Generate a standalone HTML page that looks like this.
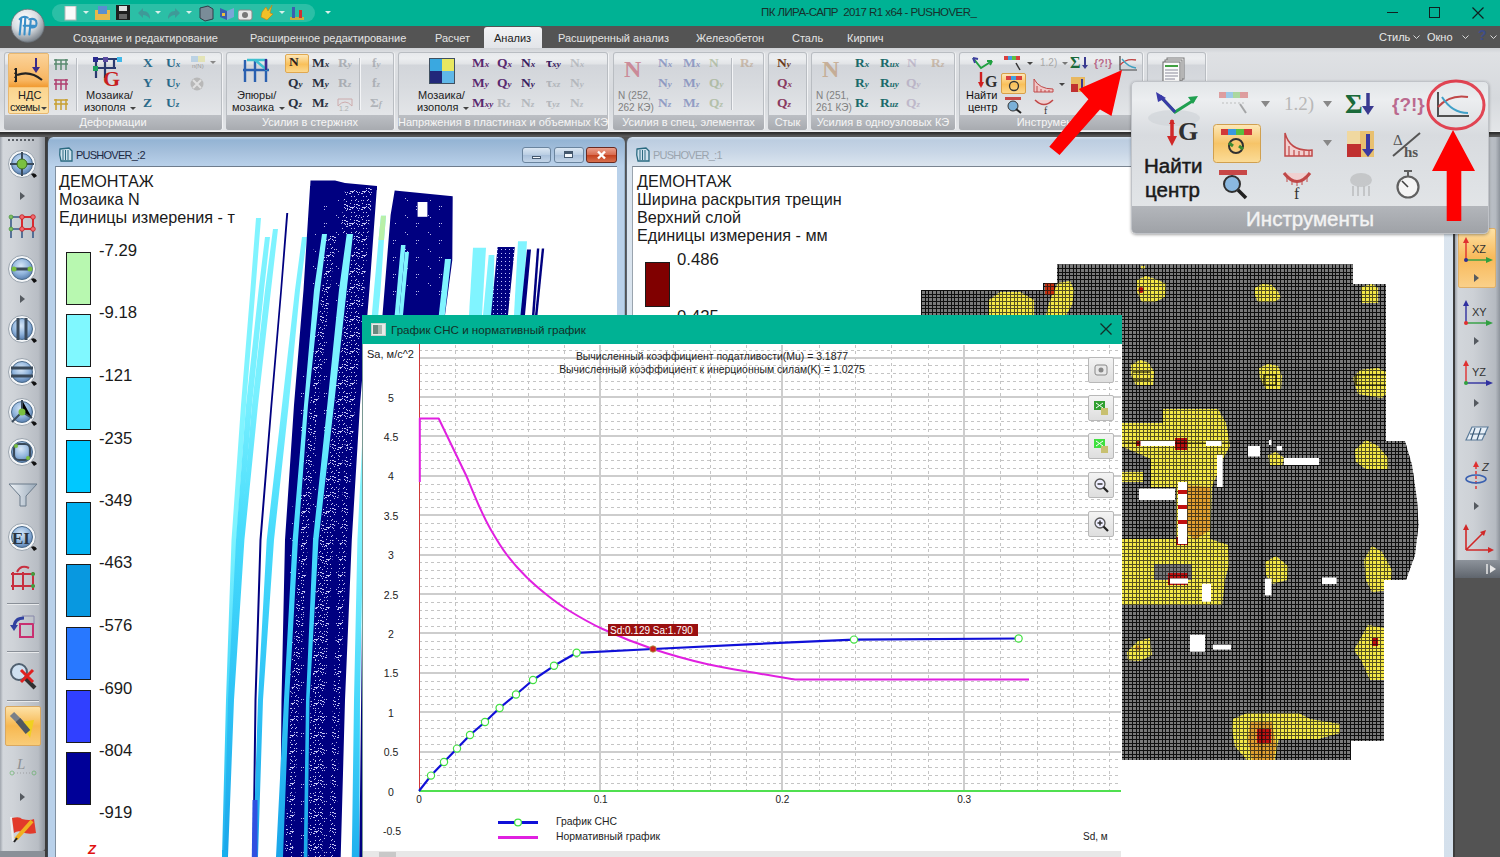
<!DOCTYPE html><html><head><meta charset="utf-8"><style>
*{margin:0;padding:0;box-sizing:border-box}
html,body{width:1500px;height:857px;overflow:hidden;background:#535353;font-family:"Liberation Sans",sans-serif}
.a{position:absolute}
.tab{position:absolute;top:32px;font-size:11px;line-height:12px;color:#e4e4e4;white-space:nowrap}
.grp{position:absolute;top:52px;height:78px;border-radius:3px;background:linear-gradient(#e6e8eb 0%,#eceef0 8%,#e2e4e7 15%,#d2d5da 17%,#d8dbdf 45%,#e3e5e8 80%,#e6e8ea 100%);box-shadow:inset 0 0 0 1px #b9bdc2,1px 0 0 #f2f3f5}
.glab{position:absolute;left:0;bottom:0;width:100%;height:15px;background:linear-gradient(#bcbfc4,#a8abb0);color:#f6f6f6;font-size:11px;text-align:center;line-height:14px;border-radius:0 0 3px 3px;white-space:nowrap;overflow:hidden}
.s{position:absolute;font-family:"Liberation Serif",serif;font-weight:bold;font-size:13.5px;line-height:15px;white-space:nowrap;margin-top:-2px}
.s i{font-size:9px;}
.t11{position:absolute;font-size:11px;line-height:12px;color:#1e1e1e;white-space:nowrap}
.lt{position:absolute;font-size:16.2px;line-height:17px;color:#1a1a1a;white-space:nowrap}
</style></head><body>
<div class="a" style="left:0px;top:0px;width:1500px;height:26px;background:#00b294"></div>
<div class="a" style="left:52px;top:4px;width:263px;height:18px;background:#2bbfa6;border-radius:9px"></div>
<svg class="a" style="left:10px;top:8px;z-index:5" width="37" height="37" viewBox="0 0 46 46">
<defs><radialGradient id="lg" cx="40%" cy="30%" r="70%"><stop offset="0" stop-color="#ffffff"/><stop offset="0.55" stop-color="#d8dde2"/><stop offset="1" stop-color="#7d858d"/></radialGradient></defs>
<circle cx="22" cy="22" r="20.5" fill="url(#lg)" stroke="#6a7078" stroke-width="1"/>
<path d="M12 14 Q16 9 22 12 M14 13 L12 33 M19 12 L18 33 M17 22 L30 22 M24 14 Q33 12 33 19 Q33 25 26 24 M26 14 L24 33" stroke="#3a8fc8" stroke-width="2.6" fill="none" stroke-linecap="round"/>
</svg>
<svg class="a" style="left:64px;top:6px" width="17" height="17"><rect x="1" y="0" width="11" height="14" fill="#fafafa" stroke="#b8b8b8"/></svg>
<svg class="a" style="left:95px;top:5px" width="17" height="17"><rect x="0" y="5" width="15" height="10" fill="#e8b84a"/><rect x="3" y="1" width="9" height="8" fill="#5a8fd0"/></svg>
<svg class="a" style="left:116px;top:5px" width="17" height="17"><rect x="0" y="0" width="14" height="15" fill="#1e1e1e"/><rect x="3" y="1" width="8" height="5" fill="#e0e0e0"/><rect x="3" y="9" width="8" height="5" fill="#666"/></svg>
<svg class="a" style="left:136px;top:6px" width="17" height="17"><path d="M2 7 L7 2 L7 5 Q14 5 14 13 Q11 9 7 9 L7 12 Z" fill="#3e9a98"/></svg>
<svg class="a" style="left:166px;top:6px" width="17" height="17"><path d="M14 7 L9 2 L9 5 Q2 5 2 13 Q5 9 9 9 L9 12 Z" fill="#3e9a98"/></svg>
<svg class="a" style="left:198px;top:5px" width="17" height="17"><path d="M2 3 L10 1 L15 4 L15 14 L7 16 L2 13 Z" fill="#7a8c98" stroke="#2f3c48"/></svg>
<svg class="a" style="left:219px;top:5px" width="17" height="17"><path d="M1 3 L8 6 L8 15 L1 12 Z" fill="#3a5fb0"/><path d="M8 6 L15 3 L15 12 L8 15 Z" fill="#7ba6d8"/><rect x="3" y="8" width="3" height="3" fill="#e8c040"/></svg>
<svg class="a" style="left:238px;top:7px" width="17" height="17"><rect x="0" y="3" width="14" height="10" rx="2" fill="#e8e8e8" stroke="#888"/><circle cx="7" cy="8" r="3" fill="#777"/></svg>
<svg class="a" style="left:259px;top:4px" width="17" height="17"><path d="M3 8 L7 3 L9 7 L13 1 L11 9 L14 10 L8 16 L2 13 Z" fill="#f0c028" stroke="#c08010" stroke-width="0.6"/></svg>
<svg class="a" style="left:289px;top:5px" width="17" height="17"><rect x="1" y="12" width="14" height="3" fill="#c8b040"/><rect x="3" y="2" width="3" height="11" fill="#3a5fb0"/><rect x="10" y="5" width="3" height="8" fill="#d03030"/></svg>
<div class="a" style="left:83px;top:11px;width:0;height:0;border-left:3px solid transparent;border-right:3px solid transparent;border-top:3px solid #d8f0ea"></div>
<div class="a" style="left:155px;top:11px;width:0;height:0;border-left:3px solid transparent;border-right:3px solid transparent;border-top:3px solid #d8f0ea"></div>
<div class="a" style="left:186px;top:11px;width:0;height:0;border-left:3px solid transparent;border-right:3px solid transparent;border-top:3px solid #d8f0ea"></div>
<div class="a" style="left:279px;top:11px;width:0;height:0;border-left:3px solid transparent;border-right:3px solid transparent;border-top:3px solid #d8f0ea"></div>
<div class="a" style="left:325px;top:11px;width:0;height:0;border-left:3px solid transparent;border-right:3px solid transparent;border-top:3px solid #d8f0ea"></div>
<div class="t11" style="left:761px;top:5px;font-size:11.5px;line-height:14px;color:#17302c;letter-spacing:-0.58px">ПК ЛИРА-САПР&nbsp; 2017 R1 x64 - PUSHOVER_</div>
<div class="a" style="left:1387px;top:12px;width:11px;height:1px;background:#102020"></div>
<div class="a" style="left:1429px;top:7px;width:11px;height:11px;border:1px solid #102020"></div>
<svg class="a" style="left:1472px;top:7px" width="12" height="12"><path d="M0.5 0.5 L11.5 11.5 M11.5 0.5 L0.5 11.5" stroke="#102020" stroke-width="1.2"/></svg>
<div class="a" style="left:0px;top:26px;width:1500px;height:22px;background:#545454"></div>
<div class="a" style="left:484px;top:27px;width:58px;height:22px;background:linear-gradient(#f2f3f5,#e2e4e8);border-radius:3px 3px 0 0"></div>
<div class="t11" style="left:494px;top:32px;font-size:11px;color:#222">Анализ</div>
<div class="tab" style="left:73px">Создание и редактирование</div>
<div class="tab" style="left:250px">Расширенное редактирование</div>
<div class="tab" style="left:435px">Расчет</div>
<div class="tab" style="left:558px">Расширенный анализ</div>
<div class="tab" style="left:696px">Железобетон</div>
<div class="tab" style="left:792px">Сталь</div>
<div class="tab" style="left:847px">Кирпич</div>
<div class="t11" style="left:1379px;top:31px;font-size:11px;color:#e8e8e8">Стиль</div>
<div class="t11" style="left:1427px;top:31px;font-size:11px;color:#e8e8e8">Окно</div>
<div class="t11" style="left:1478px;top:29px;font-size:14px;color:#3d4d8a;font-weight:bold">?</div>
<svg class="a" style="left:1413px;top:35px" width="7" height="5"><path d="M0.5 0.5 L3.5 3.5 L6.5 0.5" stroke="#d8d8d8" fill="none"/></svg>
<svg class="a" style="left:1462px;top:35px" width="7" height="5"><path d="M0.5 0.5 L3.5 3.5 L6.5 0.5" stroke="#d8d8d8" fill="none"/></svg>
<svg class="a" style="left:1490px;top:35px" width="7" height="5"><path d="M0.5 0.5 L3.5 3.5 L6.5 0.5" stroke="#d8d8d8" fill="none"/></svg>
<div class="a" style="left:0px;top:48px;width:1500px;height:84px;background:linear-gradient(#cfd2d6,#dfe1e4 6%,#d6d9dd 60%,#e4e6e9)"></div>
<div class="grp" style="left:4px;width:218px"><div class="glab">Деформации</div></div>
<div class="grp" style="left:226px;width:168px"><div class="glab">Усилия в стержнях</div></div>
<div class="grp" style="left:398px;width:210px"><div class="glab">Напряжения в пластинах и объемных КЭ</div></div>
<div class="grp" style="left:613px;width:151px"><div class="glab">Усилия в спец. элементах</div></div>
<div class="grp" style="left:768px;width:39px"><div class="glab">Стык</div></div>
<div class="grp" style="left:811px;width:144px"><div class="glab">Усилия в одноузловых КЭ</div></div>
<div class="grp" style="left:959px;width:184px"><div class="glab">Инструменты</div></div>
<div class="grp" style="left:1147px;width:59px"><div class="glab"></div></div>
<div class="a" style="left:8px;top:53px;width:41px;height:61px;background:linear-gradient(#fbd39a 0%,#f7b560 45%,#f19a30 56%,#fbd48e 57%,#fde3a8 100%);border:1px solid #e8b870;border-radius:2px"></div>
<svg class="a" style="left:12px;top:56px" width="34" height="30"><path d="M4 12 L4 26" stroke="#222" stroke-width="2"/><path d="M2 13 L4 14 M2 17 L4 18 M2 21 L4 22 M2 25 L4 26" stroke="#222"/><path d="M5 19 Q18 14 30 24" stroke="#222" stroke-width="2.2" fill="none"/><path d="M24 2 L24 14" stroke="#3a2a8a" stroke-width="2"/><path d="M20 11 L24 17 L28 11 Z" fill="#3a2a8a"/></svg>
<div class="t11" style="left:18px;top:89px;font-size:11px;line-height:13px;color:#222">НДС</div>
<div class="t11" style="left:10px;top:101px;font-size:11px;line-height:13px;color:#222;letter-spacing:-0.6px">схемы</div>
<div class="a" style="left:41px;top:107px;width:0;height:0;border-left:3px solid transparent;border-right:3px solid transparent;border-top:3px solid #444"></div>
<svg class="a" style="left:53px;top:57px" width="16" height="14"><path d="M1 3 L15 3 M1 7 L15 7 M3 2 L3 13 M8 3 L8 13 M13 2 L13 13" stroke="#5a8a70" stroke-width="1.5" fill="none"/></svg>
<svg class="a" style="left:53px;top:77px" width="16" height="14"><path d="M1 3 L15 3 M1 7 L15 7 M3 2 L3 13 M8 3 L8 13 M13 2 L13 13" stroke="#b04070" stroke-width="1.5" fill="none"/></svg>
<svg class="a" style="left:53px;top:97px" width="16" height="14"><path d="M1 3 L15 3 M1 7 L15 7 M3 2 L3 13 M8 3 L8 13 M13 2 L13 13" stroke="#c8a030" stroke-width="1.5" fill="none"/></svg>
<div class="a" style="left:76px;top:58px;width:1px;height:53px;background:#b8bcc2;box-shadow:1px 0 0 #f4f5f7"></div>
<svg class="a" style="left:92px;top:56px" width="36" height="32"><path d="M3 3 L28 3 M3 12 L24 12 M4 3 L4 22 M13 3 L13 22 M22 3 L22 12" stroke="#2a3a70" stroke-width="2.2"/><rect x="1" y="1" width="5" height="5" fill="#2a2a90"/><rect x="11" y="1" width="5" height="5" fill="#5a4aa0"/><rect x="25" y="1" width="5" height="5" fill="#40b8e8"/><rect x="1" y="10" width="5" height="5" fill="#20a060"/><text x="11" y="30" font-family="Liberation Serif" font-weight="bold" font-size="22" fill="#c82020">G</text></svg>
<div class="t11" style="left:86px;top:89px;font-size:11px;line-height:13px;color:#222">Мозаика/</div>
<div class="t11" style="left:84px;top:101px;font-size:11px;line-height:13px;color:#222">изополя</div>
<div class="a" style="left:130px;top:107px;width:0;height:0;border-left:3px solid transparent;border-right:3px solid transparent;border-top:3px solid #444"></div>
<div class="s" style="left:143px;top:57px;color:#2a6a8a;opacity:1">X</div>
<div class="s" style="left:143px;top:77px;color:#2a6a8a;opacity:1">Y</div>
<div class="s" style="left:143px;top:97px;color:#2a6a8a;opacity:1">Z</div>
<div class="s" style="left:166px;top:57px;color:#2a6a8a;opacity:1">U<i>x</i></div>
<div class="s" style="left:166px;top:77px;color:#2a6a8a;opacity:1">U<i>y</i></div>
<div class="s" style="left:166px;top:97px;color:#2a6a8a;opacity:1">U<i>z</i></div>
<svg class="a" style="left:190px;top:55px" width="16" height="14"><rect x="1" y="1" width="7" height="6" fill="#a8c8e0" opacity="0.7"/><rect x="8" y="1" width="7" height="6" fill="#e0e0a0" opacity="0.7"/><text x="2" y="13" font-size="6" fill="#999">n(N)</text></svg>
<div class="a" style="left:210px;top:61px;width:0;height:0;border-left:3px solid transparent;border-right:3px solid transparent;border-top:3px solid #888"></div>
<svg class="a" style="left:189px;top:76px" width="16" height="16"><circle cx="8" cy="8" r="6.5" fill="#b8b8b8"/><path d="M4 4 L12 12 M12 4 L4 12" stroke="#e0e0e0" stroke-width="2"/></svg>
<svg class="a" style="left:242px;top:57px" width="28" height="26"><path d="M1 13 L27 13 M3 3 L3 25 M13 3 L13 25 M24 3 L24 25" stroke="#2a60b0" stroke-width="2.4"/><path d="M5 3 L25 3 M13 3 L25 13" stroke="#40c0d0" stroke-width="2.4"/><path d="M24 2 L24 13" stroke="#3a2a90" stroke-width="2.4"/></svg>
<div class="t11" style="left:237px;top:89px;font-size:11px;line-height:13px;color:#222">Эпюры/</div>
<div class="t11" style="left:232px;top:101px;font-size:11px;line-height:13px;color:#222">мозаика</div>
<div class="a" style="left:279px;top:107px;width:0;height:0;border-left:3px solid transparent;border-right:3px solid transparent;border-top:3px solid #444"></div>
<div class="a" style="left:285px;top:54px;width:24px;height:19px;background:linear-gradient(#fde7b8,#f9c05a 55%,#fbd88e);border:1px solid #e0a850;border-radius:2px"></div>
<div class="s" style="left:289px;top:56px;color:#2a2020;opacity:1">N</div>
<div class="s" style="left:288px;top:77px;color:#2a3040;opacity:1">Q<i>y</i></div>
<div class="s" style="left:288px;top:97px;color:#2a3040;opacity:1">Q<i>z</i></div>
<div class="s" style="left:312px;top:57px;color:#2a3040;opacity:1">M<i>x</i></div>
<div class="s" style="left:312px;top:77px;color:#2a3040;opacity:1">M<i>y</i></div>
<div class="s" style="left:312px;top:97px;color:#2a3040;opacity:1">M<i>z</i></div>
<div class="s" style="left:338px;top:57px;color:#8a8f96;opacity:0.6">R<i>y</i></div>
<div class="s" style="left:338px;top:77px;color:#8a8f96;opacity:0.6">R<i>z</i></div>
<svg class="a" style="left:337px;top:96px" width="16" height="16" opacity="0.55"><path d="M1 3 L15 3 L15 10 Q8 2 1 10 Z" fill="none" stroke="#c08080"/><text x="2" y="15" font-size="7" fill="#888">1.2</text></svg>
<div class="a" style="left:359px;top:58px;width:1px;height:52px;background:#b8bcc2;box-shadow:1px 0 0 #f4f5f7"></div>
<div class="s" style="left:372px;top:57px;color:#8a8f96;opacity:0.55">f<i>y</i></div>
<div class="s" style="left:372px;top:77px;color:#8a8f96;opacity:0.55">f<i>z</i></div>
<div class="s" style="left:370px;top:97px;color:#8a8f96;opacity:0.55">Σ<i>f</i></div>
<svg class="a" style="left:429px;top:58px" width="26" height="26"><rect x="0.5" y="0.5" width="25" height="25" fill="#203080" stroke="#405060"/><rect x="1" y="1" width="12" height="12" fill="#3aa8e0"/><rect x="13" y="1" width="12" height="12" fill="#e8e860"/><rect x="13" y="13" width="12" height="12" fill="#60b8e8"/><rect x="1" y="13" width="12" height="12" fill="#22287a"/></svg>
<div class="t11" style="left:418px;top:89px;font-size:11px;line-height:13px;color:#222">Мозаика/</div>
<div class="t11" style="left:417px;top:101px;font-size:11px;line-height:13px;color:#222">изополя</div>
<div class="a" style="left:463px;top:107px;width:0;height:0;border-left:3px solid transparent;border-right:3px solid transparent;border-top:3px solid #444"></div>
<div class="s" style="left:472px;top:57px;color:#5a2a70;opacity:1">M<i>x</i></div>
<div class="s" style="left:472px;top:77px;color:#5a2a70;opacity:1">M<i>y</i></div>
<div class="s" style="left:472px;top:97px;color:#5a2a70;opacity:1">M<i>xy</i></div>
<div class="s" style="left:497px;top:57px;color:#5a2a70;opacity:1">Q<i>x</i></div>
<div class="s" style="left:497px;top:77px;color:#5a2a70;opacity:1">Q<i>y</i></div>
<div class="s" style="left:497px;top:97px;color:#8a8f96;opacity:0.5">R<i>z</i></div>
<div class="s" style="left:521px;top:57px;color:#3a2060;opacity:1">N<i>x</i></div>
<div class="s" style="left:521px;top:77px;color:#3a2060;opacity:1">N<i>y</i></div>
<div class="s" style="left:521px;top:97px;color:#8a8f96;opacity:0.5">N<i>z</i></div>
<div class="s" style="left:546px;top:57px;color:#3a2060;opacity:1">τ<i>xy</i></div>
<div class="s" style="left:546px;top:77px;color:#8a8f96;opacity:0.5">τ<i>xz</i></div>
<div class="s" style="left:546px;top:97px;color:#8a8f96;opacity:0.5">τ<i>yz</i></div>
<div class="s" style="left:570px;top:57px;color:#8a8f96;opacity:0.45">N<i>x</i></div>
<div class="s" style="left:570px;top:77px;color:#8a8f96;opacity:0.45">N<i>y</i></div>
<div class="s" style="left:570px;top:97px;color:#8a8f96;opacity:0.45">N<i>z</i></div>
<div class="s" style="left:624px;top:59px;font-size:24px;line-height:24px;color:#c87888;opacity:0.8">N</div>
<div class="t11" style="left:618px;top:90px;font-size:10px;color:#808080">N (252,</div>
<div class="t11" style="left:618px;top:102px;font-size:10px;color:#808080">262 КЭ)</div>
<div class="s" style="left:658px;top:57px;color:#6070b0;opacity:0.6">N<i>x</i></div>
<div class="s" style="left:658px;top:77px;color:#6070b0;opacity:0.6">N<i>y</i></div>
<div class="s" style="left:658px;top:97px;color:#6070b0;opacity:0.6">N<i>z</i></div>
<div class="s" style="left:683px;top:57px;color:#6070b0;opacity:0.6">M<i>x</i></div>
<div class="s" style="left:683px;top:77px;color:#6070b0;opacity:0.6">M<i>y</i></div>
<div class="s" style="left:683px;top:97px;color:#6070b0;opacity:0.6">M<i>z</i></div>
<div class="s" style="left:709px;top:57px;color:#8aa070;opacity:0.5">N</div>
<div class="s" style="left:709px;top:77px;color:#8aa070;opacity:0.5">Q<i>y</i></div>
<div class="s" style="left:709px;top:97px;color:#8aa070;opacity:0.5">Q<i>z</i></div>
<div class="a" style="left:731px;top:58px;width:1px;height:52px;background:#b8bcc2;box-shadow:1px 0 0 #f4f5f7"></div>
<div class="s" style="left:740px;top:57px;color:#b09070;opacity:0.5">R<i>z</i></div>
<div class="s" style="left:777px;top:57px;color:#6a3a20;opacity:1">N<i>y</i></div>
<div class="s" style="left:777px;top:77px;color:#8a3a60;opacity:1">Q<i>x</i></div>
<div class="s" style="left:777px;top:97px;color:#8a3a60;opacity:1">Q<i>z</i></div>
<div class="s" style="left:822px;top:59px;font-size:24px;line-height:24px;color:#c0a080;opacity:0.75">N</div>
<div class="t11" style="left:816px;top:90px;font-size:10px;color:#808080">N (251,</div>
<div class="t11" style="left:816px;top:102px;font-size:10px;color:#808080">261 КЭ)</div>
<div class="s" style="left:855px;top:57px;color:#1a6a6a;opacity:1">R<i>x</i></div>
<div class="s" style="left:855px;top:77px;color:#1a6a6a;opacity:1">R<i>y</i></div>
<div class="s" style="left:855px;top:97px;color:#1a6a6a;opacity:1">R<i>z</i></div>
<div class="s" style="left:880px;top:57px;color:#1a6a6a;opacity:1">R<i>ux</i></div>
<div class="s" style="left:880px;top:77px;color:#1a6a6a;opacity:1">R<i>uy</i></div>
<div class="s" style="left:880px;top:97px;color:#1a6a6a;opacity:1">R<i>uz</i></div>
<div class="s" style="left:907px;top:57px;color:#a090b0;opacity:0.5">N</div>
<div class="s" style="left:906px;top:77px;color:#a090b0;opacity:0.5">Q<i>y</i></div>
<div class="s" style="left:906px;top:97px;color:#a090b0;opacity:0.5">Q<i>z</i></div>
<div class="s" style="left:931px;top:57px;color:#b09070;opacity:0.5">R<i>z</i></div>
<svg class="a" style="left:970px;top:56px" width="60" height="34"><path d="M3 2 L11 12 L22 5" stroke="#20a040" stroke-width="2" fill="none"/><path d="M3 2 L5 7 M3 2 L8 3" stroke="#4040a0" stroke-width="2"/><path d="M22 5 L17 5 M22 5 L20 9" stroke="#20a040" stroke-width="2"/><path d="M11 16 L11 30" stroke="#d02020" stroke-width="2.4"/><path d="M8 26 L11 32 L14 26 Z" fill="#d02020"/><text x="15" y="31" font-family="Liberation Serif" font-weight="bold" font-size="16" fill="#303030">G</text></svg>
<div class="t11" style="left:966px;top:89px;font-size:11px;line-height:12px;color:#111">Найти</div>
<div class="t11" style="left:968px;top:101px;font-size:11px;line-height:12px;color:#111">центр</div>
<svg class="a" style="left:1003px;top:55px" width="20" height="18"><rect x="1" y="1" width="16" height="4" fill="#d84040"/><rect x="5" y="1" width="4" height="4" fill="#40a0e0"/><rect x="9" y="1" width="4" height="4" fill="#60c040"/><path d="M13 8 L17 15" stroke="#333" stroke-width="1.5"/></svg>
<div class="a" style="left:1027px;top:62px;width:0;height:0;border-left:3px solid transparent;border-right:3px solid transparent;border-top:3px solid #444"></div>
<div class="a" style="left:1001px;top:73px;width:25px;height:21px;background:linear-gradient(#fde7b8,#f9c05a 55%,#fbd88e);border:1px solid #d8a048;border-radius:2px"></div>
<svg class="a" style="left:1005px;top:75px" width="18" height="17"><rect x="1" y="1" width="16" height="4" fill="#d84040"/><rect x="6" y="1" width="5" height="4" fill="#40a0e0"/><circle cx="9" cy="11" r="4.5" fill="none" stroke="#333" stroke-width="1.3"/></svg>
<svg class="a" style="left:1004px;top:96px" width="20" height="18"><rect x="1" y="1" width="16" height="3" fill="#c84848"/><circle cx="9" cy="10" r="5" fill="#7ab0d8" stroke="#333"/><path d="M12 13 L17 17" stroke="#222" stroke-width="2"/></svg>
<div class="t11" style="left:1040px;top:57px;font-size:10px;color:#a8a8a8">1.2)</div>
<div class="a" style="left:1062px;top:62px;width:0;height:0;border-left:3px solid transparent;border-right:3px solid transparent;border-top:3px solid #777"></div>
<svg class="a" style="left:1070px;top:55px" width="20" height="16"><text x="0" y="13" font-family="Liberation Serif" font-weight="bold" font-size="16" fill="#1a6a3a">Σ</text><path d="M15 2 L15 12" stroke="#3a3a90" stroke-width="2"/><path d="M12 10 L15 14 L18 10 Z" fill="#3a3a90"/></svg>
<div class="t11" style="left:1094px;top:57px;font-size:10.5px;color:#b86a88;font-weight:bold">{?!}</div>
<svg class="a" style="left:1118px;top:55px" width="20" height="18"><path d="M2 1 L2 15 L19 15" stroke="#444" stroke-width="1.2" fill="none"/><path d="M2 10 Q8 3 18 5" stroke="#c04040" fill="none" stroke-width="1.3"/><path d="M4 4 Q10 12 18 13" stroke="#40a0c0" fill="none" stroke-width="1.3"/></svg>
<svg class="a" style="left:1033px;top:77px" width="28" height="16"><path d="M1 2 Q6 12 20 12 L20 15 L1 15 Z" fill="#f0c8c8" stroke="#c04848"/><path d="M4 9 L4 15 M8 12 L8 15 M12 13 L12 15 M16 13 L16 15" stroke="#c04848"/></svg>
<div class="a" style="left:1059px;top:83px;width:0;height:0;border-left:3px solid transparent;border-right:3px solid transparent;border-top:3px solid #444"></div>
<svg class="a" style="left:1070px;top:76px" width="18" height="18"><rect x="1" y="1" width="14" height="15" fill="#e8b860"/><rect x="1" y="8" width="7" height="8" fill="#c03030"/><path d="M12 3 L12 14" stroke="#3a3a90" stroke-width="2"/></svg>
<svg class="a" style="left:1033px;top:97px" width="22" height="18"><path d="M2 3 Q11 12 20 3" stroke="#c04848" fill="#f0d0d0" stroke-width="1.5"/><text x="11" y="17" font-family="Liberation Serif" font-size="10" fill="#333">f</text></svg>
<svg class="a" style="left:1160px;top:57px" width="30" height="26"><rect x="7" y="1" width="17" height="21" fill="#f4f4f4" stroke="#777"/><rect x="5" y="3" width="17" height="21" fill="#f4f4f4" stroke="#777"/><rect x="3" y="5" width="17" height="20" fill="#fafafa" stroke="#666"/><rect x="5" y="8" width="13" height="2" fill="#40a040"/><path d="M5 13 L18 13 M5 16 L18 16 M5 19 L18 19 M5 22 L15 22" stroke="#8a8a9a"/></svg>
<div class="a" style="left:0px;top:131px;width:1500px;height:6px;background:linear-gradient(#f2f2f2 0,#f2f2f2 1px,#2a2a2a 1px,#3a3a3a 3px,#505050 4px,#5c5c5c 6px)"></div>
<div class="a" style="left:0px;top:137px;width:45px;height:714px;background:linear-gradient(90deg,#9fa5ad 0,#d3d7dc 3px,#cfd3d8 30%,#b8bdc4 85%,#8f959d 100%);border-radius:0 0 3px 0"></div>
<div class="a" style="left:0px;top:851px;width:45px;height:6px;background:#8a9098"></div>
<div class="a" style="left:45px;top:137px;width:3px;height:720px;background:#3c3c3c"></div>
<div class="a" style="left:8px;top:139px;width:28px;height:2px;background:repeating-linear-gradient(90deg,#5a5f66 0 2px,transparent 2px 4px)"></div>
<svg class="a" style="left:6px;top:148px" width="34" height="34"><defs><radialGradient id="cg164" cx="45%" cy="35%" r="65%"><stop offset="0" stop-color="#d8e8f8"/><stop offset="0.6" stop-color="#90b4dc"/><stop offset="1" stop-color="#5a80b0"/></radialGradient></defs><circle cx="16" cy="16" r="13.5" fill="#f4f6f8" stroke="#9aa4ae" stroke-width="1"/><circle cx="16" cy="16" r="10.5" fill="url(#cg164)" stroke="#4a6a8a" stroke-width="1"/><path d="M16 4 L16 28 M4 16 L28 16" stroke="#3a4a5a" stroke-width="2"/><circle cx="16" cy="16" r="5" fill="#7ac040" stroke="#3a6a20"/><path d="M25 26 Q29 24 31 28 L28 30 Z" fill="#111"/></svg>
<div class="a" style="left:20px;top:192px;width:0;height:0;border-top:4px solid transparent;border-bottom:4px solid transparent;border-left:5px solid #555a60"></div>
<svg class="a" style="left:8px;top:212px" width="30" height="28"><path d="M3 5 L14 5 M3 17 L14 17 M3 5 L3 26 M14 17 L14 26 M25 17 L25 26" stroke="#3a5a88" stroke-width="1.6"/><path d="M14 5 L25 5 L25 17 L14 17 Z" stroke="#d82a30" stroke-width="2" fill="none"/><circle cx="3" cy="5" r="2" fill="#80c060" stroke="#3a8a30" stroke-width="0.6"/><circle cx="3" cy="17" r="2" fill="#80c060" stroke="#3a8a30" stroke-width="0.6"/><circle cx="14" cy="5" r="2.3" fill="#f06a70" stroke="#c02020" stroke-width="0.8"/><circle cx="25" cy="5" r="2.3" fill="#f06a70" stroke="#c02020" stroke-width="0.8"/><circle cx="14" cy="17" r="2.3" fill="#f06a70" stroke="#c02020" stroke-width="0.8"/><circle cx="25" cy="17" r="2.3" fill="#f06a70" stroke="#c02020" stroke-width="0.8"/></svg>
<svg class="a" style="left:6px;top:253px" width="34" height="34"><defs><radialGradient id="cg269" cx="45%" cy="35%" r="65%"><stop offset="0" stop-color="#d8e8f8"/><stop offset="0.6" stop-color="#90b4dc"/><stop offset="1" stop-color="#5a80b0"/></radialGradient></defs><circle cx="16" cy="16" r="13.5" fill="#f4f6f8" stroke="#9aa4ae" stroke-width="1"/><circle cx="16" cy="16" r="10.5" fill="url(#cg269)" stroke="#4a6a8a" stroke-width="1"/><path d="M7 16 L25 16" stroke="#3a4a5a" stroke-width="3"/><circle cx="8" cy="16" r="2.5" fill="#7ac040"/><circle cx="24" cy="16" r="2.5" fill="#7ac040"/><path d="M25 26 Q29 24 31 28 L28 30 Z" fill="#111"/></svg>
<div class="a" style="left:20px;top:295px;width:0;height:0;border-top:4px solid transparent;border-bottom:4px solid transparent;border-left:5px solid #555a60"></div>
<svg class="a" style="left:6px;top:313px" width="34" height="34"><defs><radialGradient id="cg329" cx="45%" cy="35%" r="65%"><stop offset="0" stop-color="#d8e8f8"/><stop offset="0.6" stop-color="#90b4dc"/><stop offset="1" stop-color="#5a80b0"/></radialGradient></defs><circle cx="16" cy="16" r="13.5" fill="#f4f6f8" stroke="#9aa4ae" stroke-width="1"/><circle cx="16" cy="16" r="10.5" fill="url(#cg329)" stroke="#4a6a8a" stroke-width="1"/><path d="M12 5 L12 27 M20 5 L20 27" stroke="#3a4a5a" stroke-width="3"/><path d="M25 26 Q29 24 31 28 L28 30 Z" fill="#111"/></svg>
<svg class="a" style="left:6px;top:356px" width="34" height="34"><defs><radialGradient id="cg372" cx="45%" cy="35%" r="65%"><stop offset="0" stop-color="#d8e8f8"/><stop offset="0.6" stop-color="#90b4dc"/><stop offset="1" stop-color="#5a80b0"/></radialGradient></defs><circle cx="16" cy="16" r="13.5" fill="#f4f6f8" stroke="#9aa4ae" stroke-width="1"/><circle cx="16" cy="16" r="10.5" fill="url(#cg372)" stroke="#4a6a8a" stroke-width="1"/><path d="M5 12 L27 12 M5 20 L27 20" stroke="#3a4a5a" stroke-width="3"/><path d="M25 26 Q29 24 31 28 L28 30 Z" fill="#111"/></svg>
<svg class="a" style="left:6px;top:396px" width="34" height="34"><defs><radialGradient id="cg412" cx="45%" cy="35%" r="65%"><stop offset="0" stop-color="#d8e8f8"/><stop offset="0.6" stop-color="#90b4dc"/><stop offset="1" stop-color="#5a80b0"/></radialGradient></defs><circle cx="16" cy="16" r="13.5" fill="#f4f6f8" stroke="#9aa4ae" stroke-width="1"/><circle cx="16" cy="16" r="10.5" fill="url(#cg412)" stroke="#4a6a8a" stroke-width="1"/><path d="M16 4 L16 16 L26 22 M16 16 L6 26" stroke="#3a4a5a" stroke-width="2"/><circle cx="16" cy="16" r="3.5" fill="#7ac040"/><path d="M25 26 Q29 24 31 28 L28 30 Z" fill="#111"/></svg>
<svg class="a" style="left:6px;top:436px" width="34" height="34"><defs><radialGradient id="cg452" cx="45%" cy="35%" r="65%"><stop offset="0" stop-color="#d8e8f8"/><stop offset="0.6" stop-color="#90b4dc"/><stop offset="1" stop-color="#5a80b0"/></radialGradient></defs><circle cx="16" cy="16" r="13.5" fill="#f4f6f8" stroke="#9aa4ae" stroke-width="1"/><circle cx="16" cy="16" r="10.5" fill="url(#cg452)" stroke="#4a6a8a" stroke-width="1"/><rect x="8" y="8" width="16" height="16" rx="5" fill="none" stroke="#3a4a5a" stroke-width="2.2"/><circle cx="10" cy="10" r="2" fill="#7ac040"/><circle cx="22" cy="22" r="2" fill="#7ac040"/><path d="M25 26 Q29 24 31 28 L28 30 Z" fill="#111"/></svg>
<svg class="a" style="left:8px;top:482px" width="30" height="26"><defs><linearGradient id="fun" x1="0" x2="1"><stop offset="0" stop-color="#f0f4f8"/><stop offset="1" stop-color="#98a8b8"/></linearGradient></defs><path d="M1 2 L29 2 L18 14 L18 24 L12 24 L12 14 Z" fill="url(#fun)" stroke="#6a7a8a"/></svg>
<svg class="a" style="left:6px;top:521px" width="34" height="34"><defs><radialGradient id="cg537" cx="45%" cy="35%" r="65%"><stop offset="0" stop-color="#d8e8f8"/><stop offset="0.6" stop-color="#90b4dc"/><stop offset="1" stop-color="#5a80b0"/></radialGradient></defs><circle cx="16" cy="16" r="13.5" fill="#f4f6f8" stroke="#9aa4ae" stroke-width="1"/><circle cx="16" cy="16" r="10.5" fill="url(#cg537)" stroke="#4a6a8a" stroke-width="1"/><text x="6" y="23" font-family="Liberation Serif" font-weight="bold" font-size="17" fill="#2a3440">EI</text><path d="M25 26 Q29 24 31 28 L28 30 Z" fill="#111"/></svg>
<svg class="a" style="left:7px;top:562px" width="32" height="30"><path d="M4 12 L28 12 M4 24 L28 24 M6 10 L6 28 M16 10 L16 28 M26 10 L26 28" stroke="#c83040" stroke-width="2"/><path d="M10 10 Q14 2 22 6" stroke="#c83040" stroke-width="2" fill="none"/><circle cx="26" cy="12" r="2" fill="#40a040"/><circle cx="26" cy="24" r="2" fill="#40a040"/></svg>
<div class="a" style="left:7px;top:603px;width:32px;height:1px;background:#8a9098;box-shadow:0 1px 0 #e8eaec"></div>
<svg class="a" style="left:8px;top:612px" width="30" height="30"><rect x="12" y="12" width="13" height="13" fill="none" stroke="#c83070" stroke-width="2"/><path d="M14 4 L26 4 L26 12" stroke="#88a" fill="none"/><path d="M6 16 Q6 6 16 6" stroke="#3040a0" stroke-width="3" fill="none"/><path d="M2 13 L6 19 L10 13 Z" fill="#3040a0"/></svg>
<div class="a" style="left:7px;top:651px;width:32px;height:1px;background:#8a9098;box-shadow:0 1px 0 #e8eaec"></div>
<svg class="a" style="left:7px;top:660px" width="32" height="32"><circle cx="12" cy="12" r="8" fill="#cfe0f0" stroke="#506070" stroke-width="2"/><path d="M18 18 L28 28" stroke="#303030" stroke-width="4"/><path d="M14 10 L26 22 M26 10 L14 22" stroke="#e02020" stroke-width="3"/></svg>
<div class="a" style="left:7px;top:700px;width:32px;height:1px;background:#8a9098;box-shadow:0 1px 0 #e8eaec"></div>
<div class="a" style="left:5px;top:706px;width:36px;height:40px;background:linear-gradient(#fde2a8,#f7b850 50%,#f9cc78);border:1px solid #d9a860;border-radius:2px"></div>
<svg class="a" style="left:8px;top:710px" width="30" height="32"><path d="M4 4 L16 16" stroke="#7a8088" stroke-width="6"/><path d="M12 12 L26 10 L22 28 Z" fill="#f0d020"/><path d="M10 10 L20 22" stroke="#505860" stroke-width="6"/></svg>
<svg class="a" style="left:8px;top:755px" width="30" height="22" opacity="0.5"><text x="9" y="14" font-family="Liberation Serif" font-style="italic" font-size="15" fill="#555">L</text><circle cx="4" cy="18" r="2" fill="none" stroke="#4a4"/><circle cx="26" cy="18" r="2" fill="none" stroke="#4a4"/><path d="M6 18 L24 18" stroke="#777" stroke-dasharray="1 2"/></svg>
<div class="a" style="left:20px;top:793px;width:0;height:0;border-top:4px solid transparent;border-bottom:4px solid transparent;border-left:5px solid #555a60"></div>
<svg class="a" style="left:8px;top:815px" width="30" height="28"><path d="M3 2 L5 26" stroke="#eee" stroke-width="2"/><path d="M4 3 Q12 1 14 4 Q22 6 26 4 L28 18 Q20 20 14 17 Q10 15 6 18 Z" fill="#e23a2a"/><path d="M24 6 L8 24" stroke="#f0b020" stroke-width="4"/><path d="M9 23 L6 27" stroke="#222" stroke-width="2"/></svg>
<div class="a" style="left:47px;top:137px;width:578px;height:740px;background:linear-gradient(#c4d8ec 0,#94b4d4 3px,#a6c0dc 15px,#b9d1ea 29px,#b9d1ea 100%);border:1px solid #3c4650;border-right-color:#9ab4cc;border-top:none;border-radius:6px 6px 0 0"></div>
<div class="a" style="left:55px;top:166px;width:562px;height:691px;background:#fff;border-top:1px solid #6e7c8c;border-left:1px solid #8090a0"></div>
<svg class="a" style="left:58px;top:147px" width="15" height="15"><path d="M2 2 L11 1 L14 4 L14 14 L3 14 Q1 8 2 2 Z" fill="#cfe2ee" stroke="#2a6a80" stroke-width="1.3"/><path d="M5 3 L5 13 M7.5 3 L7.5 13 M10 3 L10 13" stroke="#2a6a80" stroke-width="1"/></svg>
<div class="t11" style="left:76px;top:149px;font-size:11px;line-height:12px;color:#1c2a44;letter-spacing:-0.75px">PUSHOVER_:2</div>
<div class="a" style="left:522px;top:147px;width:29px;height:16px;background:linear-gradient(#dbe7f3,#b9cde2 50%,#a9c0da 51%,#c3d5e8);border:1px solid #6a849e;border-radius:3px"></div>
<div class="a" style="left:532px;top:156px;width:9px;height:3px;background:#f4f8fc;border:1px solid #44586e"></div>
<div class="a" style="left:554px;top:147px;width:30px;height:16px;background:linear-gradient(#dbe7f3,#b9cde2 50%,#a9c0da 51%,#c3d5e8);border:1px solid #6a849e;border-radius:3px"></div>
<div class="a" style="left:564px;top:151px;width:9px;height:7px;background:#f4f8fc;border:1px solid #44586e;box-shadow:inset 0 2px 0 #44586e"></div>
<div class="a" style="left:586px;top:147px;width:31px;height:16px;background:linear-gradient(#eba08c,#d86a4e 50%,#c4401e 51%,#d8704e);border:1px solid #6a2a20;border-radius:3px"></div>
<svg class="a" style="left:596px;top:150px" width="11" height="10"><path d="M2 1.5 L9 8.5 M9 1.5 L2 8.5" stroke="#fff" stroke-width="2.4"/></svg>
<div class="lt" style="left:59px;top:173px;">ДЕМОНТАЖ</div>
<div class="lt" style="left:59px;top:191px;">Мозаика N</div>
<div class="lt" style="left:59px;top:209px;">Единицы измерения - т</div>
<div class="a" style="left:66px;top:252px;width:25px;height:53px;background:#b8f8b0;border:1px solid #1a1a1a"></div>
<div class="a" style="left:66px;top:314px;width:25px;height:53px;background:#80f8ff;border:1px solid #1a1a1a"></div>
<div class="a" style="left:66px;top:377px;width:25px;height:53px;background:#40e0ff;border:1px solid #1a1a1a"></div>
<div class="a" style="left:66px;top:440px;width:25px;height:53px;background:#00c8ff;border:1px solid #1a1a1a"></div>
<div class="a" style="left:66px;top:502px;width:25px;height:53px;background:#00b0f0;border:1px solid #1a1a1a"></div>
<div class="a" style="left:66px;top:564px;width:25px;height:53px;background:#0898e0;border:1px solid #1a1a1a"></div>
<div class="a" style="left:66px;top:627px;width:25px;height:53px;background:#2878ff;border:1px solid #1a1a1a"></div>
<div class="a" style="left:66px;top:690px;width:25px;height:53px;background:#3040ff;border:1px solid #1a1a1a"></div>
<div class="a" style="left:66px;top:752px;width:25px;height:53px;background:#000098;border:1px solid #1a1a1a"></div>
<div class="lt" style="left:99px;top:242px;font-size:16.7px;line-height:17px">-7.29</div>
<div class="lt" style="left:99px;top:304px;font-size:16.7px;line-height:17px">-9.18</div>
<div class="lt" style="left:99px;top:367px;font-size:16.7px;line-height:17px">-121</div>
<div class="lt" style="left:99px;top:430px;font-size:16.7px;line-height:17px">-235</div>
<div class="lt" style="left:99px;top:492px;font-size:16.7px;line-height:17px">-349</div>
<div class="lt" style="left:99px;top:554px;font-size:16.7px;line-height:17px">-463</div>
<div class="lt" style="left:99px;top:617px;font-size:16.7px;line-height:17px">-576</div>
<div class="lt" style="left:99px;top:680px;font-size:16.7px;line-height:17px">-690</div>
<div class="lt" style="left:99px;top:742px;font-size:16.7px;line-height:17px">-804</div>
<div class="lt" style="left:99px;top:804px;font-size:16.7px;line-height:17px">-919</div>
<div class="t11" style="left:88px;top:844px;font-size:13px;color:#e01010;font-style:italic;font-weight:bold">Z</div>
<svg class="a" style="left:0;top:0" width="620" height="857"><defs><pattern id="dots" width="4" height="4" patternUnits="userSpaceOnUse"><rect width="4" height="4" fill="#000080"/><rect x="1" y="1" width="1" height="1" fill="#c0c0ff"/></pattern><pattern id="spk" width="23" height="17" patternUnits="userSpaceOnUse"><rect x="2" y="2" width="1" height="1" fill="#b8b8e8"/><rect x="4" y="2" width="1" height="1" fill="#b8b8e8"/><rect x="2" y="5" width="1" height="1" fill="#b8b8e8"/><rect x="14" y="11" width="1" height="1" fill="#b8b8e8"/><rect x="16" y="13" width="1" height="1" fill="#b8b8e8"/></pattern><linearGradient id="cyg" gradientUnits="userSpaceOnUse" x1="0" y1="200" x2="0" y2="857"><stop offset="0" stop-color="#80f4ff"/><stop offset="0.3" stop-color="#78f0ff"/><stop offset="0.5" stop-color="#48dcfc"/><stop offset="0.75" stop-color="#30c4f6"/><stop offset="1" stop-color="#1aa6ea"/></linearGradient><linearGradient id="cyg1" gradientUnits="userSpaceOnUse" x1="0" y1="200" x2="0" y2="857"><stop offset="0" stop-color="#80f4ff"/><stop offset="0.5" stop-color="#80f4ff"/><stop offset="0.8" stop-color="#40d4fa"/><stop offset="1" stop-color="#20b0ee"/></linearGradient><pattern id="dns" width="12" height="16" patternUnits="userSpaceOnUse"><rect x="3" y="4" width="1" height="1" fill="#c8c8f4"/><rect x="5" y="15" width="1" height="1" fill="#c8c8f4"/><rect x="10" y="2" width="1" height="1" fill="#c8c8f4"/><rect x="9" y="0" width="1" height="1" fill="#c8c8f4"/><rect x="7" y="8" width="1" height="1" fill="#c8c8f4"/><rect x="8" y="7" width="1" height="1" fill="#c8c8f4"/><rect x="3" y="15" width="1" height="1" fill="#c8c8f4"/><rect x="8" y="15" width="1" height="1" fill="#c8c8f4"/><rect x="6" y="4" width="1" height="1" fill="#c8c8f4"/><rect x="3" y="4" width="1" height="1" fill="#c8c8f4"/><rect x="8" y="12" width="1" height="1" fill="#c8c8f4"/><rect x="11" y="0" width="1" height="1" fill="#c8c8f4"/><rect x="10" y="2" width="1" height="1" fill="#c8c8f4"/><rect x="2" y="1" width="1" height="1" fill="#c8c8f4"/><rect x="4" y="0" width="1" height="1" fill="#c8c8f4"/><rect x="4" y="15" width="1" height="1" fill="#c8c8f4"/><rect x="9" y="12" width="1" height="1" fill="#c8c8f4"/><rect x="11" y="13" width="1" height="1" fill="#c8c8f4"/><rect x="6" y="14" width="1" height="1" fill="#c8c8f4"/><rect x="2" y="11" width="1" height="1" fill="#c8c8f4"/><rect x="1" y="1" width="1" height="1" fill="#c8c8f4"/><rect x="2" y="15" width="1" height="1" fill="#c8c8f4"/><rect x="3" y="8" width="1" height="1" fill="#c8c8f4"/><rect x="10" y="13" width="1" height="1" fill="#c8c8f4"/><rect x="10" y="9" width="1" height="1" fill="#c8c8f4"/><rect x="6" y="12" width="1" height="1" fill="#c8c8f4"/></pattern><clipPath id="lwc"><rect x="56" y="167" width="561" height="690"/></clipPath></defs><g clip-path="url(#lwc)"><polygon points="256.0,218.0 250.4,290.0 241.0,405.0 231.5,540.0 226.0,700.0 222.0,857.0 226.0,857.0 230.0,700.0 236.5,540.0 246.0,405.0 255.4,290.0 261.0,218.0" fill="url(#cyg1)" /><polygon points="265.0,237.0 258.6,290.0 246.0,405.0 236.0,540.0 228.0,700.0 224.0,857.0 227.0,857.0 232.0,700.0 241.0,540.0 252.0,405.0 264.0,290.0 270.0,237.0" fill="url(#cyg)" /><polygon points="273.0,229.0 265.0,290.0 252.0,405.0 240.0,540.0 231.0,700.0 226.0,857.0 228.0,857.0 234.0,700.0 244.4,540.0 258.0,405.0 271.0,290.0 278.0,229.0" fill="url(#cyg)" /><polygon points="222.0,850.0 222.0,857.0 227.0,857.0 227.0,850.0" fill="#18b0ee" /><polygon points="286.3,213.0 280.3,290.0 270.5,405.0 259.5,540.0 254.5,700.0 252.5,857.0 254.5,857.0 256.5,700.0 261.5,540.0 272.3,405.0 282.0,290.0 288.2,213.0" fill="#000080" /><polygon points="302.0,237.0 295.0,290.0 282.0,405.0 266.7,540.0 258.0,700.0 253.0,857.0 258.0,857.0 263.0,700.0 274.0,540.0 288.7,405.0 300.0,290.0 307.0,237.0" fill="url(#cyg)" /><polygon points="252.5,800.0 251.8,857.0 257.4,857.0 257.5,800.0" fill="#3050e0" /><polygon points="310.1,186.0 303.5,290.0 294.0,405.0 285.0,540.0 281.5,700.0 280.0,857.0 340.7,857.0 345.0,700.0 351.8,540.0 360.0,405.0 369.4,290.0 377.0,186.0" fill="#000080" /><polygon points="310.5,180.5 335,180.5 345,183 377,186 377,190 310,190" fill="#000080"/><polygon points="318.0,200.0 310.0,290.0 300.0,405.0 290.0,540.0 286.0,700.0 284.0,857.0 334.0,857.0 338.0,700.0 344.0,540.0 352.0,405.0 362.0,290.0 372.0,200.0" fill="url(#spk)" /><polygon points="322.0,234.0 314.0,290.0 304.0,405.0 292.6,540.0 284.0,700.0 276.0,857.0 283.0,857.0 289.0,700.0 298.0,540.0 308.0,405.0 320.0,290.0 327.0,234.0" fill="url(#cyg)" /><polygon points="346.7,234.0 339.0,290.0 327.3,405.0 313.0,540.0 306.0,700.0 303.7,857.0 307.4,857.0 309.5,700.0 318.5,540.0 334.0,405.0 346.7,290.0 353.0,234.0" fill="url(#cyg)" /><polygon points="329.0,234.0 322.0,290.0 310.0,405.0 300.0,540.0 291.0,700.0 285.0,857.0 293.0,857.0 299.0,700.0 308.0,540.0 318.0,405.0 330.0,290.0 337.0,234.0" fill="url(#dns)" /><polygon points="354.0,234.0 347.7,290.0 335.0,405.0 319.5,540.0 310.5,700.0 308.4,857.0 322.4,857.0 324.5,700.0 333.5,540.0 349.0,405.0 361.7,290.0 368.0,234.0" fill="url(#dns)" /><polygon points="365.0,186.0 357.4,290.0 348.0,405.0 339.8,540.0 333.0,700.0 328.7,857.0 335.7,857.0 340.0,700.0 346.8,540.0 355.0,405.0 364.4,290.0 372.0,186.0" fill="url(#dns)" /><polygon points="345.0,190.0 340.0,234.0 368.0,234.0 372.0,190.0" fill="url(#dns)" /><polygon points="381.0,215.7 378.5,240.0 374.0,290.0 364.0,405.0 357.4,540.0 354.0,700.0 351.8,857.0 359.3,857.0 360.0,700.0 363.0,540.0 370.0,405.0 380.5,290.0 384.0,240.0 386.0,215.7" fill="url(#cyg1)" /><polygon points="381.0,215.7 378.5,240.0 384.0,240.0 386.0,215.7" fill="#b8f0a8" /><polygon points="394.7,190.6 452.7,196.3 452.3,260 445,315 445,857 359,857 359.3,857 363,540 382.5,315 390.6,215" fill="#000080"/><polygon points="398,196 450,201 448,300 386,300" fill="url(#spk)"/><rect x="417.6" y="202" width="9.8" height="14.8" fill="#fff"/><polygon points="401.0,245.0 394.7,315.0 399.0,315.0 405.5,245.0" fill="#80f4ff" /><polygon points="405.0,252.0 399.0,315.0 403.0,315.0 409.0,252.0" fill="#80f4ff" /><polygon points="445.0,259.0 438.8,315.0 444.8,315.0 451.0,259.0" fill="#80f4ff" /><polygon points="473.0,247.8 469.0,315.0 482.0,315.0 486.0,247.8" fill="#80f4ff" /><polygon points="488.7,255.0 483.0,315.0 492.7,315.0 494.4,255.0" fill="#80f4ff" /><polygon points="497.6,247.0 491.0,315.0 508.0,315.0 514.8,247.0" fill="url(#dots)" /><polygon points="518.0,241.3 514.0,315.0 522.0,315.0 527.0,241.3" fill="#80f4ff" /><polygon points="527.0,249.4 520.5,315.0 525.0,315.0 531.0,249.4" fill="#000080" /><polygon points="536.9,248.6 532.0,315.0 534.5,315.0 539.3,248.6" fill="#000080" /><polygon points="541.8,248.6 535.0,315.0 537.5,315.0 544.2,248.6" fill="#000080" /></g></svg>
<div class="a" style="left:626px;top:137px;width:828px;height:740px;background:linear-gradient(#d8e4f0 0,#bccde0 3px,#c8d6e6 15px,#dbe5ef 29px,#d4e0ec 100%);border:1px solid #5a6470;border-top:none;border-radius:6px 6px 0 0"></div>
<div class="a" style="left:632px;top:166px;width:812px;height:691px;background:#fff;border-top:1px solid #7a8490;border-left:1px solid #9aa4ae"></div>
<svg class="a" style="left:635px;top:147px" width="15" height="15"><path d="M2 2 L11 1 L14 4 L14 14 L3 14 Q1 8 2 2 Z" fill="#cfe2ee" stroke="#2a6a80" stroke-width="1.3"/><path d="M5 3 L5 13 M7.5 3 L7.5 13 M10 3 L10 13" stroke="#2a6a80" stroke-width="1"/></svg>
<div class="t11" style="left:653px;top:149px;font-size:11px;line-height:12px;color:#9aa4ae;letter-spacing:-0.75px">PUSHOVER_:1</div>
<div class="lt" style="left:637px;top:173px;">ДЕМОНТАЖ</div>
<div class="lt" style="left:637px;top:191px;">Ширина раскрытия трещин</div>
<div class="lt" style="left:637px;top:209px;">Верхний слой</div>
<div class="lt" style="left:637px;top:227px;">Единицы измерения - мм</div>
<div class="a" style="left:645px;top:262px;width:25px;height:45px;background:#800000;border:1px solid #1a1a1a"></div>
<div class="lt" style="left:677px;top:251px;font-size:16.7px;line-height:17px">0.486</div>
<div class="lt" style="left:677px;top:308px;font-size:16.7px;line-height:17px">0.425</div>
<svg class="a" style="left:0;top:0" width="1500" height="857"><defs><clipPath id="mc"><polygon points="921,290 1043,290 1043,283 1057,283 1057,264.5 1353,264.5 1353,284 1386,284 1386,441 1405,441 1412,465 1417,500 1418.5,525 1415,555 1406,580 1384,580 1384,741 1351,741 1351,760 921,760"/></clipPath><pattern id="grid" width="3.7" height="3.65" patternUnits="userSpaceOnUse"><rect x="0" y="0" width="3.7" height="0.9" fill="#000"/><rect x="0" y="0" width="0.9" height="3.65" fill="#000"/></pattern></defs><g clip-path="url(#mc)"><rect x="900" y="250" width="540" height="520" fill="#7a7a7a"/><polygon points="989,300 1000,292 1020,292 1034,300 1034,315 989,315" fill="#f4e848"/><polygon points="1046,315 1050,300 1058,283 1070,281 1074,290 1072,305 1066,315" fill="#f4e848"/><rect x="1045" y="283" width="9" height="12" fill="#c83010"/><polygon points="1137,280 1146,276 1158,280 1166,284 1165,297 1155,302 1142,302 1137,292" fill="#f4e848"/><ellipse cx="1141" cy="290" rx="2.5" ry="3" fill="#c01010" transform="rotate(0 1141 290)"/><rect x="1141" y="266" width="4" height="3" fill="#f4e848"/><polygon points="1255,288 1262,284 1272,285 1278,292 1281,297 1275,302 1258,302 1255,295" fill="#f4e848"/><polygon points="1361,287 1372,284 1378,288 1378,303 1362,303" fill="#f4e848"/><polygon points="1131,365 1140,360 1149,363 1154,372 1153,385 1136,385 1131,375" fill="#f4e848"/><polygon points="1259,368 1268,364 1278,366 1282,376 1281,389 1266,389 1260,378" fill="#f4e848"/><polygon points="1353,378 1360,370 1378,368 1386,372 1386,394 1382,398 1358,394" fill="#f4e848"/><polygon points="1163,409 1218,409 1226,423 1230,446 1223,459 1151,459 1121,446 1121,423 1163,423" fill="#f4e848"/><polygon points="1151,459 1223,459 1212,487 1210,539 1228,545 1229,564 1225,580 1222,605 1121,605 1121,539 1176,539 1176,487 1151,487" fill="#f4e848"/><rect x="1121" y="472" width="22" height="10" fill="#f4e848"/><rect x="1154" y="564" width="38" height="16" fill="#7a7a7a"/><polygon points="1184,485 1210,487 1210,530 1195,540 1184,530" fill="#e0a030"/><rect x="1175" y="438" width="12" height="12" fill="#c01010"/><rect x="1136" y="441" width="5" height="5" fill="#c01010"/><rect x="1176" y="537" width="12" height="8" fill="#c01010"/><rect x="1168" y="573" width="20" height="12" fill="#c01010"/><polygon points="1355,450 1366,440 1378,446 1388,458 1388,469 1366,469 1356,462" fill="#f4e848"/><polygon points="1268,455 1276,452 1284,458 1282,465 1270,465" fill="#f4e848"/><polygon points="1364,560 1372,546 1382,552 1392,570 1390,590 1372,592 1366,580" fill="#f4e848"/><polygon points="1265,562 1276,556 1288,566 1287,580 1272,584 1266,575" fill="#f4e848"/><polygon points="1127,652 1138,641 1150,638 1152,655 1140,661 1128,660" fill="#f4e848"/><ellipse cx="1138" cy="648" rx="3" ry="2.5" fill="#e0a030" transform="rotate(0 1138 648)"/><polygon points="1354,650 1368,625 1384,628 1384,680 1370,680 1362,662" fill="#f4e848"/><rect x="1372" y="638" width="6" height="8" fill="#c01010"/><polygon points="1232,729 1233,719 1247,713 1298.5,713 1310,719 1340,724 1340,733 1318,739 1278.6,739 1274.7,760 1247,760 1235,746.7" fill="#f4e848"/><polygon points="1250,722 1272,722 1276,745 1274,760 1252,760 1248,740" fill="#e0a030"/><rect x="1257" y="729" width="14" height="14" fill="#c01010"/><path d="M921.5 250V770M925.5 250V770M928.5 250V770M932.5 250V770M936.5 250V770M940.5 250V770M943.5 250V770M947.5 250V770M951.5 250V770M954.5 250V770M958.5 250V770M962.5 250V770M965.5 250V770M969.5 250V770M973.5 250V770M976.5 250V770M980.5 250V770M984.5 250V770M988.5 250V770M991.5 250V770M995.5 250V770M999.5 250V770M1002.5 250V770M1006.5 250V770M1010.5 250V770M1014.5 250V770M1017.5 250V770M1021.5 250V770M1025.5 250V770M1028.5 250V770M1032.5 250V770M1036.5 250V770M1039.5 250V770M1043.5 250V770M1047.5 250V770M1050.5 250V770M1054.5 250V770M1058.5 250V770M1062.5 250V770M1065.5 250V770M1069.5 250V770M1073.5 250V770M1076.5 250V770M1080.5 250V770M1084.5 250V770M1088.5 250V770M1091.5 250V770M1095.5 250V770M1099.5 250V770M1102.5 250V770M1106.5 250V770M1110.5 250V770M1113.5 250V770M1117.5 250V770M1121.5 250V770M1124.5 250V770M1128.5 250V770M1132.5 250V770M1136.5 250V770M1139.5 250V770M1143.5 250V770M1147.5 250V770M1150.5 250V770M1154.5 250V770M1158.5 250V770M1162.5 250V770M1165.5 250V770M1169.5 250V770M1173.5 250V770M1176.5 250V770M1180.5 250V770M1184.5 250V770M1187.5 250V770M1191.5 250V770M1195.5 250V770M1198.5 250V770M1202.5 250V770M1206.5 250V770M1210.5 250V770M1213.5 250V770M1217.5 250V770M1221.5 250V770M1224.5 250V770M1228.5 250V770M1232.5 250V770M1236.5 250V770M1239.5 250V770M1243.5 250V770M1247.5 250V770M1250.5 250V770M1254.5 250V770M1258.5 250V770M1261.5 250V770M1265.5 250V770M1269.5 250V770M1272.5 250V770M1276.5 250V770M1280.5 250V770M1284.5 250V770M1287.5 250V770M1291.5 250V770M1295.5 250V770M1298.5 250V770M1302.5 250V770M1306.5 250V770M1310.5 250V770M1313.5 250V770M1317.5 250V770M1321.5 250V770M1324.5 250V770M1328.5 250V770M1332.5 250V770M1335.5 250V770M1339.5 250V770M1343.5 250V770M1346.5 250V770M1350.5 250V770M1354.5 250V770M1358.5 250V770M1361.5 250V770M1365.5 250V770M1369.5 250V770M1372.5 250V770M1376.5 250V770M1380.5 250V770M1384.5 250V770M1387.5 250V770M1391.5 250V770M1395.5 250V770M1398.5 250V770M1402.5 250V770M1406.5 250V770M1409.5 250V770M1413.5 250V770M1417.5 250V770M900 250.5H1440M900 254.5H1440M900 257.5H1440M900 261.5H1440M900 264.5H1440M900 268.5H1440M900 272.5H1440M900 275.5H1440M900 279.5H1440M900 283.5H1440M900 286.5H1440M900 290.5H1440M900 294.5H1440M900 297.5H1440M900 301.5H1440M900 305.5H1440M900 308.5H1440M900 312.5H1440M900 316.5H1440M900 319.5H1440M900 323.5H1440M900 327.5H1440M900 330.5H1440M900 334.5H1440M900 338.5H1440M900 341.5H1440M900 345.5H1440M900 348.5H1440M900 352.5H1440M900 356.5H1440M900 359.5H1440M900 363.5H1440M900 367.5H1440M900 370.5H1440M900 374.5H1440M900 378.5H1440M900 381.5H1440M900 385.5H1440M900 389.5H1440M900 392.5H1440M900 396.5H1440M900 400.5H1440M900 403.5H1440M900 407.5H1440M900 410.5H1440M900 414.5H1440M900 418.5H1440M900 421.5H1440M900 425.5H1440M900 429.5H1440M900 432.5H1440M900 436.5H1440M900 440.5H1440M900 443.5H1440M900 447.5H1440M900 451.5H1440M900 454.5H1440M900 458.5H1440M900 462.5H1440M900 465.5H1440M900 469.5H1440M900 473.5H1440M900 476.5H1440M900 480.5H1440M900 484.5H1440M900 487.5H1440M900 491.5H1440M900 494.5H1440M900 498.5H1440M900 502.5H1440M900 505.5H1440M900 509.5H1440M900 513.5H1440M900 516.5H1440M900 520.5H1440M900 524.5H1440M900 527.5H1440M900 531.5H1440M900 535.5H1440M900 538.5H1440M900 542.5H1440M900 546.5H1440M900 549.5H1440M900 553.5H1440M900 556.5H1440M900 560.5H1440M900 564.5H1440M900 567.5H1440M900 571.5H1440M900 575.5H1440M900 578.5H1440M900 582.5H1440M900 586.5H1440M900 589.5H1440M900 593.5H1440M900 597.5H1440M900 600.5H1440M900 604.5H1440M900 608.5H1440M900 611.5H1440M900 615.5H1440M900 619.5H1440M900 622.5H1440M900 626.5H1440M900 630.5H1440M900 633.5H1440M900 637.5H1440M900 640.5H1440M900 644.5H1440M900 648.5H1440M900 651.5H1440M900 655.5H1440M900 659.5H1440M900 662.5H1440M900 666.5H1440M900 670.5H1440M900 673.5H1440M900 677.5H1440M900 681.5H1440M900 684.5H1440M900 688.5H1440M900 692.5H1440M900 695.5H1440M900 699.5H1440M900 702.5H1440M900 706.5H1440M900 710.5H1440M900 713.5H1440M900 717.5H1440M900 721.5H1440M900 724.5H1440M900 728.5H1440M900 732.5H1440M900 735.5H1440M900 739.5H1440M900 743.5H1440M900 746.5H1440M900 750.5H1440M900 754.5H1440M900 757.5H1440M900 761.5H1440M900 765.5H1440M900 768.5H1440" stroke="#101010" stroke-width="1" fill="none"/><g opacity="0.3"><polygon points="989,300 1000,292 1020,292 1034,300 1034,315 989,315" fill="#f4e848"/><polygon points="1046,315 1050,300 1058,283 1070,281 1074,290 1072,305 1066,315" fill="#f4e848"/><rect x="1045" y="283" width="9" height="12" fill="#c83010"/><polygon points="1137,280 1146,276 1158,280 1166,284 1165,297 1155,302 1142,302 1137,292" fill="#f4e848"/><ellipse cx="1141" cy="290" rx="2.5" ry="3" fill="#c01010" transform="rotate(0 1141 290)"/><rect x="1141" y="266" width="4" height="3" fill="#f4e848"/><polygon points="1255,288 1262,284 1272,285 1278,292 1281,297 1275,302 1258,302 1255,295" fill="#f4e848"/><polygon points="1361,287 1372,284 1378,288 1378,303 1362,303" fill="#f4e848"/><polygon points="1131,365 1140,360 1149,363 1154,372 1153,385 1136,385 1131,375" fill="#f4e848"/><polygon points="1259,368 1268,364 1278,366 1282,376 1281,389 1266,389 1260,378" fill="#f4e848"/><polygon points="1353,378 1360,370 1378,368 1386,372 1386,394 1382,398 1358,394" fill="#f4e848"/><polygon points="1163,409 1218,409 1226,423 1230,446 1223,459 1151,459 1121,446 1121,423 1163,423" fill="#f4e848"/><polygon points="1151,459 1223,459 1212,487 1210,539 1228,545 1229,564 1225,580 1222,605 1121,605 1121,539 1176,539 1176,487 1151,487" fill="#f4e848"/><rect x="1121" y="472" width="22" height="10" fill="#f4e848"/><rect x="1154" y="564" width="38" height="16" fill="#7a7a7a"/><polygon points="1184,485 1210,487 1210,530 1195,540 1184,530" fill="#e0a030"/><rect x="1175" y="438" width="12" height="12" fill="#c01010"/><rect x="1136" y="441" width="5" height="5" fill="#c01010"/><rect x="1176" y="537" width="12" height="8" fill="#c01010"/><rect x="1168" y="573" width="20" height="12" fill="#c01010"/><polygon points="1355,450 1366,440 1378,446 1388,458 1388,469 1366,469 1356,462" fill="#f4e848"/><polygon points="1268,455 1276,452 1284,458 1282,465 1270,465" fill="#f4e848"/><polygon points="1364,560 1372,546 1382,552 1392,570 1390,590 1372,592 1366,580" fill="#f4e848"/><polygon points="1265,562 1276,556 1288,566 1287,580 1272,584 1266,575" fill="#f4e848"/><polygon points="1127,652 1138,641 1150,638 1152,655 1140,661 1128,660" fill="#f4e848"/><ellipse cx="1138" cy="648" rx="3" ry="2.5" fill="#e0a030" transform="rotate(0 1138 648)"/><polygon points="1354,650 1368,625 1384,628 1384,680 1370,680 1362,662" fill="#f4e848"/><rect x="1372" y="638" width="6" height="8" fill="#c01010"/><polygon points="1232,729 1233,719 1247,713 1298.5,713 1310,719 1340,724 1340,733 1318,739 1278.6,739 1274.7,760 1247,760 1235,746.7" fill="#f4e848"/><polygon points="1250,722 1272,722 1276,745 1274,760 1252,760 1248,740" fill="#e0a030"/><rect x="1257" y="729" width="14" height="14" fill="#c01010"/></g><path d="M1122.5 443 L1240 443 M1136.5 488 L1136.5 528 L1176 528 M1262.5 490 L1262.5 700 M1262 598 L1262 757 M1400 441 L1405 441" stroke="#000" stroke-width="1" fill="none" opacity="0.7"/><path d="M1264 375 L1276 375 L1276 385 L1264 385 Z M1356 375 L1386 375 M1356 385 L1386 385 M1356 375 L1356 385 M1133 372 L1150 372 M1133 380 L1150 380" stroke="#000" stroke-width="1.2" fill="none"/><rect x="1140.5" y="441" width="34.5" height="5" fill="#fff"/><rect x="1206" y="441" width="15.5" height="5" fill="#fff"/><rect x="1217" y="455" width="5.7" height="32" fill="#fff"/><rect x="1248" y="446" width="12" height="10.5" fill="#fff"/><rect x="1284" y="458" width="35" height="7" fill="#fff"/><rect x="1139" y="488.6" width="36" height="11.4" fill="#fff"/><rect x="1178" y="482" width="9" height="62" fill="#fff"/><rect x="1170" y="578.5" width="18" height="5.2" fill="#fff"/><rect x="1202" y="583.7" width="9" height="18" fill="#fff"/><rect x="1265" y="578.6" width="6.5" height="16.8" fill="#fff"/><rect x="1322" y="577.5" width="14.6" height="6.5" fill="#fff"/><rect x="1190" y="634.7" width="15" height="17" fill="#fff"/><rect x="1213" y="644.6" width="18" height="5" fill="#fff"/><rect x="1276.7" y="446" width="5.3" height="4.5" fill="#fff"/><rect x="1269" y="440" width="2.5" height="5" fill="#fff"/><rect x="1178" y="490" width="9" height="4" fill="#c01010"/><rect x="1178" y="505" width="9" height="4" fill="#c01010"/><rect x="1178" y="520" width="9" height="4" fill="#c01010"/></g></svg>
<div class="a" style="left:1453px;top:137px;width:2px;height:720px;background:#3c3c3c"></div>
<div class="a" style="left:1455px;top:137px;width:45px;height:441px;background:linear-gradient(90deg,#9aa0a8 0,#d2d6db 3px,#cdd1d6 40%,#b5bac1 90%,#8e949c 100%)"></div>
<div class="a" style="left:1455px;top:560px;width:45px;height:18px;background:linear-gradient(#8d939b,#5f656d)"></div>
<svg class="a" style="left:1486px;top:563px" width="12" height="12"><path d="M1 1 L1 11" stroke="#e8e8e8" stroke-width="1.5"/><path d="M4 2 L10 6 L4 10 Z" fill="#e8e8e8"/></svg>
<div class="a" style="left:1458px;top:228px;width:38px;height:60px;background:linear-gradient(#fde1a4,#f8b95a 50%,#fad089);border:1px solid #e0b068;border-radius:2px"></div>
<svg class="a" style="left:1460px;top:236px" width="36" height="28"><path d="M6 24 L6 3" stroke="#e03030" stroke-width="1.4"/><path d="M3 7 L6 1 L9 7 Z" fill="#e03030"/><path d="M6 24 L30 24" stroke="#30a040" stroke-width="1.4"/><path d="M26 21 L33 24 L26 27 Z" fill="#30a040"/><circle cx="6" cy="24" r="2" fill="#303090"/><text x="12" y="17" font-family="Liberation Sans" font-size="11" fill="#333">XZ</text></svg>
<div class="a" style="left:1474px;top:274px;width:0;height:0;border-top:4px solid transparent;border-bottom:4px solid transparent;border-left:5px solid #555a60"></div>
<svg class="a" style="left:1460px;top:299px" width="36" height="28"><path d="M6 24 L6 3" stroke="#3030a0" stroke-width="1.4"/><path d="M3 7 L6 1 L9 7 Z" fill="#3030a0"/><path d="M6 24 L30 24" stroke="#30a040" stroke-width="1.4"/><path d="M26 21 L33 24 L26 27 Z" fill="#30a040"/><circle cx="6" cy="24" r="2" fill="#e03030"/><text x="12" y="17" font-family="Liberation Sans" font-size="11" fill="#333">XY</text></svg>
<div class="a" style="left:1474px;top:337px;width:0;height:0;border-top:4px solid transparent;border-bottom:4px solid transparent;border-left:5px solid #555a60"></div>
<svg class="a" style="left:1460px;top:359px" width="36" height="28"><path d="M6 24 L6 3" stroke="#e03030" stroke-width="1.4"/><path d="M3 7 L6 1 L9 7 Z" fill="#e03030"/><path d="M6 24 L30 24" stroke="#3030a0" stroke-width="1.4"/><path d="M26 21 L33 24 L26 27 Z" fill="#3030a0"/><circle cx="6" cy="24" r="2" fill="#30a040"/><text x="12" y="17" font-family="Liberation Sans" font-size="11" fill="#333">YZ</text></svg>
<div class="a" style="left:1474px;top:399px;width:0;height:0;border-top:4px solid transparent;border-bottom:4px solid transparent;border-left:5px solid #555a60"></div>
<svg class="a" style="left:1462px;top:424px" width="30" height="20"><path d="M4 16 L10 3 L26 3 L20 16 Z" fill="#e8f0f8" stroke="#5a7a98" stroke-width="1.2"/><path d="M8 10 L24 10 M13 4 L9 16 M19 4 L15 16" stroke="#3a5a78" stroke-width="1.2"/></svg>
<svg class="a" style="left:1462px;top:459px" width="32" height="32"><path d="M14 30 L14 4" stroke="#e03030" stroke-width="1.4" stroke-dasharray="3 2"/><path d="M11 8 L14 2 L17 8 Z" fill="#e03030"/><ellipse cx="14" cy="20" rx="10" ry="4" fill="none" stroke="#3a60b0" stroke-width="1.6"/><text x="20" y="12" font-size="11" font-style="italic" fill="#333">Z</text></svg>
<div class="a" style="left:1474px;top:502px;width:0;height:0;border-top:4px solid transparent;border-bottom:4px solid transparent;border-left:5px solid #555a60"></div>
<svg class="a" style="left:1462px;top:522px" width="32" height="32"><path d="M4 28 L4 4 M4 28 L30 28 M4 28 L22 10" stroke="#d02828" stroke-width="1.6"/><path d="M1 8 L4 2 L7 8 Z M26 25 L32 28 L26 31 Z M18 10 L24 8 L22 14 Z" fill="#d02828"/></svg>
<div class="a" style="left:362px;top:315px;width:760px;height:542px;background:#fff;border-left:1px solid #7a9a94"></div>
<div class="a" style="left:362px;top:315px;width:760px;height:29px;background:#00b294"></div>
<svg class="a" style="left:371px;top:323px" width="15" height="13"><rect x="0.5" y="0.5" width="14" height="12" fill="#e8ece8" stroke="#c8d0cc"/><rect x="2" y="2" width="5" height="9" fill="#6a8a80"/><rect x="7" y="2" width="4" height="9" fill="#a8b8b0"/></svg>
<div class="t11" style="left:391px;top:323px;font-size:11.6px;line-height:14px;color:#133028">График СНС и нормативный график</div>
<svg class="a" style="left:1100px;top:323px" width="12" height="12"><path d="M0.5 0.5 L11.5 11.5 M11.5 0.5 L0.5 11.5" stroke="#12302a" stroke-width="1.3"/></svg>
<svg class="a" style="left:0;top:0" width="1500" height="857"><line x1="419" y1="783.5" x2="1121" y2="783.5" stroke="#c4c4c4" stroke-width="1" stroke-dasharray="3 3"/><line x1="419" y1="775.5" x2="1121" y2="775.5" stroke="#c4c4c4" stroke-width="1" stroke-dasharray="3 3"/><line x1="419" y1="767.5" x2="1121" y2="767.5" stroke="#c4c4c4" stroke-width="1" stroke-dasharray="3 3"/><line x1="419" y1="759.5" x2="1121" y2="759.5" stroke="#c4c4c4" stroke-width="1" stroke-dasharray="3 3"/><line x1="419" y1="744.5" x2="1121" y2="744.5" stroke="#c4c4c4" stroke-width="1" stroke-dasharray="3 3"/><line x1="419" y1="736.5" x2="1121" y2="736.5" stroke="#c4c4c4" stroke-width="1" stroke-dasharray="3 3"/><line x1="419" y1="728.5" x2="1121" y2="728.5" stroke="#c4c4c4" stroke-width="1" stroke-dasharray="3 3"/><line x1="419" y1="720.5" x2="1121" y2="720.5" stroke="#c4c4c4" stroke-width="1" stroke-dasharray="3 3"/><line x1="419" y1="704.5" x2="1121" y2="704.5" stroke="#c4c4c4" stroke-width="1" stroke-dasharray="3 3"/><line x1="419" y1="696.5" x2="1121" y2="696.5" stroke="#c4c4c4" stroke-width="1" stroke-dasharray="3 3"/><line x1="419" y1="689.5" x2="1121" y2="689.5" stroke="#c4c4c4" stroke-width="1" stroke-dasharray="3 3"/><line x1="419" y1="681.5" x2="1121" y2="681.5" stroke="#c4c4c4" stroke-width="1" stroke-dasharray="3 3"/><line x1="419" y1="665.5" x2="1121" y2="665.5" stroke="#c4c4c4" stroke-width="1" stroke-dasharray="3 3"/><line x1="419" y1="657.5" x2="1121" y2="657.5" stroke="#c4c4c4" stroke-width="1" stroke-dasharray="3 3"/><line x1="419" y1="649.5" x2="1121" y2="649.5" stroke="#c4c4c4" stroke-width="1" stroke-dasharray="3 3"/><line x1="419" y1="641.5" x2="1121" y2="641.5" stroke="#c4c4c4" stroke-width="1" stroke-dasharray="3 3"/><line x1="419" y1="626.5" x2="1121" y2="626.5" stroke="#c4c4c4" stroke-width="1" stroke-dasharray="3 3"/><line x1="419" y1="618.5" x2="1121" y2="618.5" stroke="#c4c4c4" stroke-width="1" stroke-dasharray="3 3"/><line x1="419" y1="610.5" x2="1121" y2="610.5" stroke="#c4c4c4" stroke-width="1" stroke-dasharray="3 3"/><line x1="419" y1="602.5" x2="1121" y2="602.5" stroke="#c4c4c4" stroke-width="1" stroke-dasharray="3 3"/><line x1="419" y1="586.5" x2="1121" y2="586.5" stroke="#c4c4c4" stroke-width="1" stroke-dasharray="3 3"/><line x1="419" y1="578.5" x2="1121" y2="578.5" stroke="#c4c4c4" stroke-width="1" stroke-dasharray="3 3"/><line x1="419" y1="570.5" x2="1121" y2="570.5" stroke="#c4c4c4" stroke-width="1" stroke-dasharray="3 3"/><line x1="419" y1="562.5" x2="1121" y2="562.5" stroke="#c4c4c4" stroke-width="1" stroke-dasharray="3 3"/><line x1="419" y1="547.5" x2="1121" y2="547.5" stroke="#c4c4c4" stroke-width="1" stroke-dasharray="3 3"/><line x1="419" y1="539.5" x2="1121" y2="539.5" stroke="#c4c4c4" stroke-width="1" stroke-dasharray="3 3"/><line x1="419" y1="531.5" x2="1121" y2="531.5" stroke="#c4c4c4" stroke-width="1" stroke-dasharray="3 3"/><line x1="419" y1="523.5" x2="1121" y2="523.5" stroke="#c4c4c4" stroke-width="1" stroke-dasharray="3 3"/><line x1="419" y1="507.5" x2="1121" y2="507.5" stroke="#c4c4c4" stroke-width="1" stroke-dasharray="3 3"/><line x1="419" y1="499.5" x2="1121" y2="499.5" stroke="#c4c4c4" stroke-width="1" stroke-dasharray="3 3"/><line x1="419" y1="492.5" x2="1121" y2="492.5" stroke="#c4c4c4" stroke-width="1" stroke-dasharray="3 3"/><line x1="419" y1="484.5" x2="1121" y2="484.5" stroke="#c4c4c4" stroke-width="1" stroke-dasharray="3 3"/><line x1="419" y1="468.5" x2="1121" y2="468.5" stroke="#c4c4c4" stroke-width="1" stroke-dasharray="3 3"/><line x1="419" y1="460.5" x2="1121" y2="460.5" stroke="#c4c4c4" stroke-width="1" stroke-dasharray="3 3"/><line x1="419" y1="452.5" x2="1121" y2="452.5" stroke="#c4c4c4" stroke-width="1" stroke-dasharray="3 3"/><line x1="419" y1="444.5" x2="1121" y2="444.5" stroke="#c4c4c4" stroke-width="1" stroke-dasharray="3 3"/><line x1="419" y1="429.5" x2="1121" y2="429.5" stroke="#c4c4c4" stroke-width="1" stroke-dasharray="3 3"/><line x1="419" y1="421.5" x2="1121" y2="421.5" stroke="#c4c4c4" stroke-width="1" stroke-dasharray="3 3"/><line x1="419" y1="413.5" x2="1121" y2="413.5" stroke="#c4c4c4" stroke-width="1" stroke-dasharray="3 3"/><line x1="419" y1="405.5" x2="1121" y2="405.5" stroke="#c4c4c4" stroke-width="1" stroke-dasharray="3 3"/><line x1="419" y1="389.5" x2="1121" y2="389.5" stroke="#c4c4c4" stroke-width="1" stroke-dasharray="3 3"/><line x1="419" y1="381.5" x2="1121" y2="381.5" stroke="#c4c4c4" stroke-width="1" stroke-dasharray="3 3"/><line x1="419" y1="373.5" x2="1121" y2="373.5" stroke="#c4c4c4" stroke-width="1" stroke-dasharray="3 3"/><line x1="419" y1="365.5" x2="1121" y2="365.5" stroke="#c4c4c4" stroke-width="1" stroke-dasharray="3 3"/><line x1="419" y1="350.5" x2="1121" y2="350.5" stroke="#c4c4c4" stroke-width="1" stroke-dasharray="3 3"/><line x1="455.5" y1="345" x2="455.5" y2="790" stroke="#c4c4c4" stroke-width="1" stroke-dasharray="3 3"/><line x1="492.5" y1="345" x2="492.5" y2="790" stroke="#c4c4c4" stroke-width="1" stroke-dasharray="3 3"/><line x1="528.5" y1="345" x2="528.5" y2="790" stroke="#c4c4c4" stroke-width="1" stroke-dasharray="3 3"/><line x1="564.5" y1="345" x2="564.5" y2="790" stroke="#c4c4c4" stroke-width="1" stroke-dasharray="3 3"/><line x1="637.5" y1="345" x2="637.5" y2="790" stroke="#c4c4c4" stroke-width="1" stroke-dasharray="3 3"/><line x1="673.5" y1="345" x2="673.5" y2="790" stroke="#c4c4c4" stroke-width="1" stroke-dasharray="3 3"/><line x1="710.5" y1="345" x2="710.5" y2="790" stroke="#c4c4c4" stroke-width="1" stroke-dasharray="3 3"/><line x1="746.5" y1="345" x2="746.5" y2="790" stroke="#c4c4c4" stroke-width="1" stroke-dasharray="3 3"/><line x1="819.5" y1="345" x2="819.5" y2="790" stroke="#c4c4c4" stroke-width="1" stroke-dasharray="3 3"/><line x1="855.5" y1="345" x2="855.5" y2="790" stroke="#c4c4c4" stroke-width="1" stroke-dasharray="3 3"/><line x1="891.5" y1="345" x2="891.5" y2="790" stroke="#c4c4c4" stroke-width="1" stroke-dasharray="3 3"/><line x1="928.5" y1="345" x2="928.5" y2="790" stroke="#c4c4c4" stroke-width="1" stroke-dasharray="3 3"/><line x1="1000.5" y1="345" x2="1000.5" y2="790" stroke="#c4c4c4" stroke-width="1" stroke-dasharray="3 3"/><line x1="1037.5" y1="345" x2="1037.5" y2="790" stroke="#c4c4c4" stroke-width="1" stroke-dasharray="3 3"/><line x1="1073.5" y1="345" x2="1073.5" y2="790" stroke="#c4c4c4" stroke-width="1" stroke-dasharray="3 3"/><line x1="1109.5" y1="345" x2="1109.5" y2="790" stroke="#c4c4c4" stroke-width="1" stroke-dasharray="3 3"/><line x1="419" y1="752" x2="1121" y2="752" stroke="#cdcdcd" stroke-width="2"/><line x1="419" y1="712" x2="1121" y2="712" stroke="#cdcdcd" stroke-width="2"/><line x1="419" y1="673" x2="1121" y2="673" stroke="#cdcdcd" stroke-width="2"/><line x1="419" y1="633" x2="1121" y2="633" stroke="#cdcdcd" stroke-width="2"/><line x1="419" y1="594" x2="1121" y2="594" stroke="#cdcdcd" stroke-width="2"/><line x1="419" y1="555" x2="1121" y2="555" stroke="#cdcdcd" stroke-width="2"/><line x1="419" y1="515" x2="1121" y2="515" stroke="#cdcdcd" stroke-width="2"/><line x1="419" y1="476" x2="1121" y2="476" stroke="#cdcdcd" stroke-width="2"/><line x1="419" y1="436" x2="1121" y2="436" stroke="#cdcdcd" stroke-width="2"/><line x1="419" y1="397" x2="1121" y2="397" stroke="#cdcdcd" stroke-width="2"/><line x1="419" y1="358" x2="1121" y2="358" stroke="#cdcdcd" stroke-width="2"/><line x1="600" y1="345" x2="600" y2="790" stroke="#cdcdcd" stroke-width="2"/><line x1="782" y1="345" x2="782" y2="790" stroke="#cdcdcd" stroke-width="2"/><line x1="964" y1="345" x2="964" y2="790" stroke="#cdcdcd" stroke-width="2"/><line x1="419.5" y1="344" x2="419.5" y2="791" stroke="#d03838" stroke-width="1"/><line x1="419" y1="791" x2="1121" y2="791" stroke="#50e050" stroke-width="2"/><path d="M419.8,482 L419.8,418.5 L438.7,418.5 L466.4,476  C468.6,481.2 475.4,498.0 479.5,507 C483.6,516.0 486.4,522.0 491,530 C495.6,538.0 501.1,547.2 507,555 C512.9,562.8 519.7,570.3 526.4,577 C533.1,583.7 540.1,589.5 547,595 C553.9,600.5 558.7,604.3 568,610 C577.3,615.7 588.4,622.5 602.6,629 C616.8,635.5 635.7,643.2 653,649 C670.3,654.8 689.0,659.9 706.6,664 C724.2,668.1 743.9,670.9 758.6,673.5 C773.3,676.1 788.9,678.6 795,679.6 L1029,679.6" fill="none" stroke="#e020e0" stroke-width="2" stroke-linejoin="round"/><polyline points="419,791 431,775.6 444,762 457,748.6 470,735 485,722 499.6,708 516,694.5 533,680 554,665.8 576.6,652.8 653,649 758.6,643.8 854,639.6 1018.6,638.5" fill="none" stroke="#1010d8" stroke-width="2.2" stroke-linejoin="round"/><circle cx="431" cy="775.6" r="3.6" fill="#fff" stroke="#40e040" stroke-width="1.2"/><circle cx="444" cy="762" r="3.6" fill="#fff" stroke="#40e040" stroke-width="1.2"/><circle cx="457" cy="748.6" r="3.6" fill="#fff" stroke="#40e040" stroke-width="1.2"/><circle cx="470" cy="735" r="3.6" fill="#fff" stroke="#40e040" stroke-width="1.2"/><circle cx="485" cy="722" r="3.6" fill="#fff" stroke="#40e040" stroke-width="1.2"/><circle cx="499.6" cy="708" r="3.6" fill="#fff" stroke="#40e040" stroke-width="1.2"/><circle cx="516" cy="694.5" r="3.6" fill="#fff" stroke="#40e040" stroke-width="1.2"/><circle cx="533" cy="680" r="3.6" fill="#fff" stroke="#40e040" stroke-width="1.2"/><circle cx="554" cy="665.8" r="3.6" fill="#fff" stroke="#40e040" stroke-width="1.2"/><circle cx="576.6" cy="652.8" r="3.6" fill="#fff" stroke="#40e040" stroke-width="1.2"/><circle cx="854" cy="639.6" r="3.6" fill="#fff" stroke="#40e040" stroke-width="1.2"/><circle cx="1018.6" cy="638.5" r="3.6" fill="#fff" stroke="#40e040" stroke-width="1.2"/><circle cx="653" cy="649" r="3.2" fill="#d02020" stroke="#a0a040" stroke-width="0.8"/><rect x="608" y="624" width="90" height="12" fill="#9a1010"/><text x="610" y="634" font-family="Liberation Sans" font-size="10" fill="#fff">Sd:0.129 Sa:1.790</text><line x1="498" y1="822.5" x2="538" y2="822.5" stroke="#1010d8" stroke-width="3"/><circle cx="518" cy="822.5" r="3.4" fill="#fff" stroke="#40e040" stroke-width="1.2"/><line x1="498" y1="837.5" x2="538" y2="837.5" stroke="#e020e0" stroke-width="3"/></svg>
<div class="a" style="left:377px;top:785.5px;width:28px;text-align:center;font-size:10.5px;line-height:12px;color:#222">0</div>
<div class="a" style="left:377px;top:746.1px;width:28px;text-align:center;font-size:10.5px;line-height:12px;color:#222">0.5</div>
<div class="a" style="left:377px;top:706.7px;width:28px;text-align:center;font-size:10.5px;line-height:12px;color:#222">1</div>
<div class="a" style="left:377px;top:667.3px;width:28px;text-align:center;font-size:10.5px;line-height:12px;color:#222">1.5</div>
<div class="a" style="left:377px;top:627.9px;width:28px;text-align:center;font-size:10.5px;line-height:12px;color:#222">2</div>
<div class="a" style="left:377px;top:588.5px;width:28px;text-align:center;font-size:10.5px;line-height:12px;color:#222">2.5</div>
<div class="a" style="left:377px;top:549.1px;width:28px;text-align:center;font-size:10.5px;line-height:12px;color:#222">3</div>
<div class="a" style="left:377px;top:509.7px;width:28px;text-align:center;font-size:10.5px;line-height:12px;color:#222">3.5</div>
<div class="a" style="left:377px;top:470.3px;width:28px;text-align:center;font-size:10.5px;line-height:12px;color:#222">4</div>
<div class="a" style="left:377px;top:430.9px;width:28px;text-align:center;font-size:10.5px;line-height:12px;color:#222">4.5</div>
<div class="a" style="left:377px;top:391.5px;width:28px;text-align:center;font-size:10.5px;line-height:12px;color:#222">5</div>
<div class="a" style="left:370px;top:824.9px;width:31px;text-align:right;font-size:10.5px;line-height:12px;color:#222">-0.5</div>
<div class="t11" style="left:367px;top:348px;font-size:11px;color:#222">Sa, м/с^2</div>
<div class="a" style="left:399.0px;top:794px;width:40px;text-align:center;font-size:10px;line-height:12px;color:#222">0</div>
<div class="a" style="left:580.7px;top:794px;width:40px;text-align:center;font-size:10px;line-height:12px;color:#222">0.1</div>
<div class="a" style="left:762.4px;top:794px;width:40px;text-align:center;font-size:10px;line-height:12px;color:#222">0.2</div>
<div class="a" style="left:944.1px;top:794px;width:40px;text-align:center;font-size:10px;line-height:12px;color:#222">0.3</div>
<div class="a" style="left:512px;top:350px;width:400px;text-align:center;font-size:10.45px;line-height:13px;color:#222">Вычисленный коэффициент податливости(Mu) = 3.1877<br>Вычисленный коэффициент к инерционным силам(K) = 1.0275</div>
<div class="t11" style="left:556px;top:816px;font-size:10.4px;color:#222">График СНС</div>
<div class="t11" style="left:556px;top:831px;font-size:10.4px;color:#222">Нормативный график</div>
<div class="t11" style="left:1083px;top:831px;font-size:10px;color:#222">Sd, м</div>
<div class="a" style="left:363px;top:851px;width:758px;height:6px;background:#e8e8e8"></div>
<div class="a" style="left:379px;top:852px;width:17px;height:5px;background:#c8c8c8"></div>
<div class="a" style="left:1088px;top:357px;width:26px;height:26px;background:linear-gradient(#f4f4f4,#dedede);border:1px solid #b8b8b8;border-radius:2px"></div>
<div class="a" style="left:1088px;top:395px;width:26px;height:26px;background:linear-gradient(#f4f4f4,#dedede);border:1px solid #b8b8b8;border-radius:2px"></div>
<div class="a" style="left:1088px;top:433px;width:26px;height:26px;background:linear-gradient(#f4f4f4,#dedede);border:1px solid #b8b8b8;border-radius:2px"></div>
<div class="a" style="left:1088px;top:472px;width:26px;height:26px;background:linear-gradient(#f4f4f4,#dedede);border:1px solid #b8b8b8;border-radius:2px"></div>
<div class="a" style="left:1088px;top:511px;width:26px;height:26px;background:linear-gradient(#f4f4f4,#dedede);border:1px solid #b8b8b8;border-radius:2px"></div>
<svg class="a" style="left:1092px;top:361px" width="18" height="18"><rect x="3" y="4" width="12" height="10" rx="2" fill="#e8e8e8" stroke="#888"/><circle cx="9" cy="9" r="2.5" fill="#888"/></svg>
<svg class="a" style="left:1092px;top:399px" width="18" height="18"><rect x="2" y="2" width="11" height="9" fill="#30a030"/><path d="M4 4 L11 9 M11 4 L4 9" stroke="#fff"/><rect x="9" y="9" width="7" height="7" fill="#c8c070"/></svg>
<svg class="a" style="left:1092px;top:437px" width="18" height="18"><rect x="2" y="2" width="11" height="9" fill="#40e040"/><path d="M4 4 L11 9 M11 4 L4 9" stroke="#fff"/><rect x="9" y="9" width="7" height="7" fill="#c8c070"/></svg>
<svg class="a" style="left:1092px;top:476px" width="18" height="18"><circle cx="8" cy="8" r="5" fill="#eef" stroke="#555" stroke-width="1.3"/><path d="M5.5 8 L10.5 8" stroke="#333" stroke-width="1.5"/><path d="M11.5 11.5 L16 16" stroke="#222" stroke-width="2.2"/></svg>
<svg class="a" style="left:1092px;top:515px" width="18" height="18"><circle cx="8" cy="8" r="5" fill="#eef" stroke="#555" stroke-width="1.3"/><path d="M5.5 8 L10.5 8 M8 5.5 L8 10.5" stroke="#333" stroke-width="1.5"/><path d="M11.5 11.5 L16 16" stroke="#222" stroke-width="2.2"/></svg>
<div class="a" style="left:1131px;top:81px;width:358px;height:153px;border-radius:5px;background:linear-gradient(#e2e5e8 0%,#eceef0 12%,#d8dbdf 35%,#dfe2e5 70%,#e6e8ea 100%);border:1px solid #c0c3c8;box-shadow:0 1px 3px rgba(0,0,0,0.35);overflow:hidden"><div style="position:absolute;left:0;bottom:0;width:100%;height:27px;background:linear-gradient(#b3b6bb,#9fa2a7);color:#f3f3f3;font-size:20.5px;-webkit-text-stroke:0.4px #f3f3f3;line-height:26px;text-align:center;padding-left:0">Инструменты</div></div>
<svg class="a" style="left:0;top:0" width="1500" height="857"><defs><linearGradient id="obt" x1="0" y1="0" x2="0" y2="1"><stop offset="0" stop-color="#fde8b8"/><stop offset="0.5" stop-color="#f6c468"/><stop offset="1" stop-color="#fbdc98"/></linearGradient></defs><ellipse cx="1174" cy="118" rx="26" ry="8" fill="#d0d4d8" opacity="0.7"/><path d="M1160 96 L1175 112 L1194 100" stroke="#20a050" stroke-width="3" fill="none"/><path d="M1160 96 L1175 112" stroke="#3a3aa8" stroke-width="3"/><path d="M1156 92 L1158 102 L1166 98 Z" fill="#3a3aa8"/><path d="M1198 96 L1188 97 L1193 104 Z" fill="#20a050"/><path d="M1172 120 L1172 142" stroke="#d02828" stroke-width="3.5"/><path d="M1167 136 L1172 146 L1177 136 Z M1169 124 L1172 119 L1175 124 Z" fill="#d02828"/><text x="1178" y="140" font-family="Liberation Serif" font-weight="bold" font-size="26" fill="#303030">G</text><text x="1144" y="173" font-family="Liberation Sans" font-size="20.5" fill="#1a1a1a" stroke="#1a1a1a" stroke-width="0.5">Найти</text><text x="1145" y="197" font-family="Liberation Sans" font-size="20.5" fill="#1a1a1a" stroke="#1a1a1a" stroke-width="0.5">центр</text><g opacity="0.45"><rect x="1219" y="92" width="29" height="6" fill="#d04040"/><rect x="1226" y="92" width="7" height="6" fill="#40a0e0"/><rect x="1233" y="92" width="7" height="6" fill="#60c040"/><path d="M1222 103 L1246 103" stroke="#888" stroke-dasharray="2 2"/><path d="M1240 104 L1246 113" stroke="#555" stroke-width="2"/></g><path d="M1261 101 L1270 101 L1265.5 107 Z M1323 101 L1332 101 L1327.5 107 Z M1323 140 L1332 140 L1327.5 146 Z" fill="#888"/><text x="1284" y="110" font-family="Liberation Serif" font-size="19" fill="#b8b8b8">1.2)</text><text x="1345" y="113" font-family="Liberation Serif" font-weight="bold" font-size="27" fill="#1a6a3a">Σ</text><path d="M1368 93 L1368 110" stroke="#3a3a90" stroke-width="3.5"/><path d="M1362 106 L1368 115 L1374 106 Z" fill="#3a3a90"/><text x="1392" y="111" font-family="Liberation Sans" font-weight="bold" font-size="19" fill="#b04a78" opacity="0.8">{?!}</text><path d="M1438 92 L1438 116 L1469 116" stroke="#505050" stroke-width="2" fill="none"/><path d="M1438 107 Q1450 94 1468 97" stroke="#c04848" stroke-width="2" fill="none"/><path d="M1442 97 Q1452 113 1468 113" stroke="#40a0c8" stroke-width="2" fill="none"/><ellipse cx="1456" cy="105" rx="28" ry="24" fill="none" stroke="#e02838" stroke-width="3" opacity="0.85"/><rect x="1213.5" y="124.5" width="47" height="38" rx="3" fill="url(#obt)" stroke="#d0a050"/><rect x="1221" y="129" width="31" height="6" fill="#d03838"/><rect x="1228" y="129" width="8" height="6" fill="#3898e0"/><rect x="1236" y="129" width="8" height="6" fill="#58c040"/><circle cx="1236" cy="146" r="7" fill="none" stroke="#303030" stroke-width="2"/><path d="M1229 143 L1233 146 M1243 149 L1239 146" stroke="#3a8a30" stroke-width="3"/><path d="M1285 133 Q1290 152 1312 150 L1312 156 L1285 156 Z" fill="#f2d0d0" stroke="#c04848" stroke-width="1.5"/><path d="M1289 146 L1289 156 M1294 150 L1294 156 M1299 151 L1299 156 M1304 151 L1304 156 M1309 151 L1309 156" stroke="#c04848" stroke-width="1.2"/><rect x="1347" y="131" width="27" height="26" fill="#e8c070"/><rect x="1347" y="131" width="13" height="13" fill="#f0d8a0"/><rect x="1347" y="144" width="14" height="13" fill="#c03030"/><path d="M1368 134 L1368 152" stroke="#3a3aa0" stroke-width="4"/><path d="M1362 149 L1368 157 L1374 149 Z" fill="#3a3aa0"/><text x="1393" y="145" font-family="Liberation Serif" font-size="15" fill="#555">Δ</text><path d="M1393 156 L1420 133" stroke="#555" stroke-width="2"/><text x="1404" y="157" font-family="Liberation Serif" font-weight="bold" font-size="15" fill="#555">hs</text><rect x="1219" y="170" width="28" height="5" fill="#c84848"/><circle cx="1232" cy="184" r="8" fill="#8ab8e0" stroke="#303030" stroke-width="2"/><path d="M1238 190 L1246 198" stroke="#202020" stroke-width="3.5"/><path d="M1284 173 Q1297 190 1310 173" stroke="#c04848" stroke-width="3" fill="#f0d0d0"/><path d="M1287 177 L1287 182 M1292 180 L1292 185 M1297 181 L1297 186 M1302 180 L1302 185 M1307 177 L1307 182" stroke="#c04848"/><text x="1294" y="199" font-family="Liberation Serif" font-size="16" fill="#333">f</text><g opacity="0.35"><ellipse cx="1361" cy="180" rx="11" ry="7" fill="#999"/><path d="M1353 186 L1353 196 M1358 186 L1358 196 M1364 186 L1364 196 M1369 186 L1369 196" stroke="#777" stroke-width="1.5"/></g><circle cx="1408" cy="187" r="10.5" fill="#f4f4f4" stroke="#606060" stroke-width="2.2"/><path d="M1408 176 L1408 172 M1404 171 L1412 171" stroke="#606060" stroke-width="2"/><path d="M1408 187 L1402 181" stroke="#404040" stroke-width="1.6"/></svg>
<svg class="a" style="left:0;top:0" width="1500" height="857"><polygon points="1122,70 1111.5,116 1100,109.6 1059.5,155 1049.3,146.8 1088.4,99.3 1078.8,89" fill="#fe0000"/><polygon points="1453,130 1475,171 1461.3,171 1461.3,221 1446.7,221 1446.7,171 1432,171" fill="#fe0000"/></svg>
</body></html>
